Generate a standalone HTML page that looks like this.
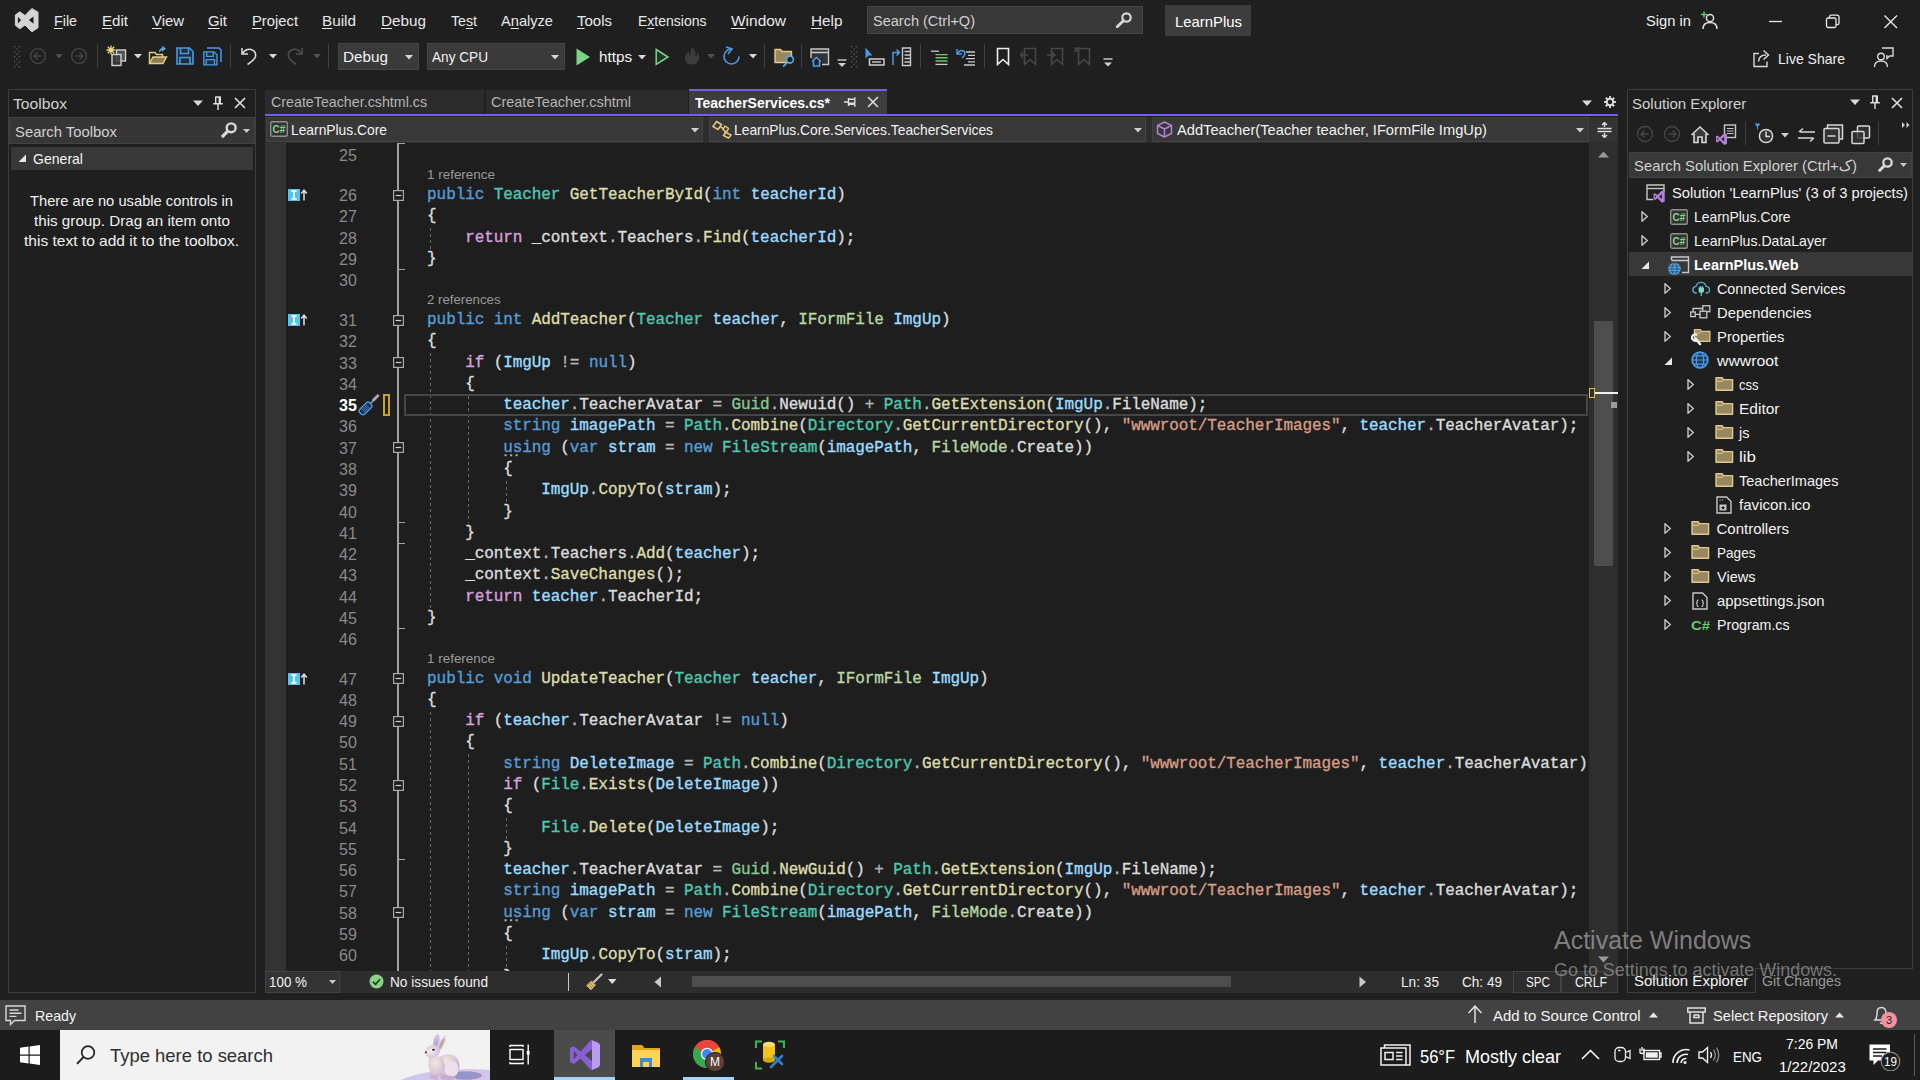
<!DOCTYPE html>
<html lang="en"><head><meta charset="utf-8"><title>LearnPlus - Microsoft Visual Studio</title>
<style>
html,body{margin:0;padding:0;}
body{width:1920px;height:1080px;overflow:hidden;background:#1f1f1f;font-family:"Liberation Sans", "DejaVu Sans", sans-serif;position:relative;}
body>div,body>svg{position:absolute;}
.t{white-space:pre;transform-origin:0 0;}
.c{font-family:"Liberation Mono", monospace;font-size:16px;letter-spacing:-0.088px;white-space:pre;color:#dcdcdc;height:21px;line-height:21px;left:351px;-webkit-text-stroke:0.35px currentColor;}
.k{color:#569cd6}.f{color:#d8a0df}.y{color:#4ec9b0}.i{color:#b8d7a3}.m{color:#dcdcaa}.v{color:#9cdcfe}.s{color:#d69d85}.o{color:#b4b4b4}.g{color:#86c691}
u{text-decoration:underline;text-underline-offset:1.5px;text-decoration-thickness:1px;}
</style></head>
<body>
<svg style="left:14px;top:7px;" width="26" height="26" viewBox="0 0 26 26"><path fill="#d4d4d4" stroke="#d4d4d4" stroke-width="1" stroke-linejoin="round" d="M17.9 1.5 L24 5.2 V20.8 L17.9 24.8 L11 18 L5.8 21.8 L1.4 18.3 V7.9 L5.8 4.8 L11 8.6 Z"/><path fill="#1f1f1f" d="M3.9 9.9 V16.4 L7.1 13.1 Z M19.5 9.6 V16.7 L14.9 13.1 Z"/></svg>
<div class="t" style="left:54px;top:12px;font-size:15px;line-height:17px;color:#e8e8e8;transform:scaleX(0.9515);"><u>F</u>ile</div>
<div class="t" style="left:102px;top:12px;font-size:15px;line-height:17px;color:#e8e8e8;transform:scaleX(1.0054);"><u>E</u>dit</div>
<div class="t" style="left:152px;top:12px;font-size:15px;line-height:17px;color:#e8e8e8;transform:scaleX(0.9922);"><u>V</u>iew</div>
<div class="t" style="left:208px;top:12px;font-size:15px;line-height:17px;color:#e8e8e8;transform:scaleX(0.9910);"><u>G</u>it</div>
<div class="t" style="left:252px;top:12px;font-size:15px;line-height:17px;color:#e8e8e8;transform:scaleX(0.9853);"><u>P</u>roject</div>
<div class="t" style="left:322px;top:12px;font-size:15px;line-height:17px;color:#e8e8e8;transform:scaleX(1.0192);"><u>B</u>uild</div>
<div class="t" style="left:381px;top:12px;font-size:15px;line-height:17px;color:#e8e8e8;transform:scaleX(1.0180);"><u>D</u>ebug</div>
<div class="t" style="left:451px;top:12px;font-size:15px;line-height:17px;color:#e8e8e8;transform:scaleX(0.9449);">Te<u>s</u>t</div>
<div class="t" style="left:501px;top:12px;font-size:15px;line-height:17px;color:#e8e8e8;transform:scaleX(0.9742);">A<u>n</u>alyze</div>
<div class="t" style="left:577px;top:12px;font-size:15px;line-height:17px;color:#e8e8e8;"><u>T</u>ools</div>
<div class="t" style="left:637.5px;top:12px;font-size:15px;line-height:17px;color:#e8e8e8;transform:scaleX(0.9336);">E<u>x</u>tensions</div>
<div class="t" style="left:731px;top:12px;font-size:15px;line-height:17px;color:#e8e8e8;transform:scaleX(1.0307);"><u>W</u>indow</div>
<div class="t" style="left:811px;top:12px;font-size:15px;line-height:17px;color:#e8e8e8;transform:scaleX(1.0208);"><u>H</u>elp</div>
<div style="left:867px;top:6px;width:276px;height:28px;background:#383838;border:1px solid #464646;box-sizing:border-box;"></div>
<div class="t" style="left:873px;top:12px;font-size:15px;line-height:17px;color:#d0d0d0;transform:scaleX(0.9673);">Search (Ctrl+Q)</div>
<svg style="left:1115px;top:11px;" width="18" height="18" viewBox="0 0 18 18"><circle cx="11.5" cy="6.5" r="4.2" fill="none" stroke="#d8d8d8" stroke-width="2.2"/><path d="M8.6 9.4 L2.2 15.8" stroke="#d8d8d8" stroke-width="2.8" stroke-linecap="round"/></svg>
<div style="left:1165px;top:5px;width:86px;height:31px;background:#3d3d3d;"></div>
<div class="t" style="left:1175px;top:13px;font-size:15px;line-height:17px;color:#ffffff;transform:scaleX(0.9919);">LearnPlus</div>
<div class="t" style="left:1646px;top:12px;font-size:15px;line-height:17px;color:#f0f0f0;transform:scaleX(0.9809);">Sign in</div>
<svg style="left:1698px;top:10px;" width="22" height="20" viewBox="0 0 22 20"><g fill="none" stroke="#e0e0e0" stroke-width="1.5"><circle cx="12" cy="8" r="3.6"/><path d="M5 19 Q5 12.5 12 12.5 Q19 12.5 19 19"/></g><path d="M3 4.5 H9 M6 1.5 V7.5" stroke="#5fc86a" stroke-width="1.5"/></svg>
<svg style="left:1768px;top:14px;" width="16" height="14" viewBox="0 0 16 14"><path d="M1 7.5 H14" stroke="#e8e8e8" stroke-width="1.3"/></svg>
<svg style="left:1825px;top:14px;" width="16" height="15" viewBox="0 0 16 15"><g fill="none" stroke="#e8e8e8" stroke-width="1.3"><rect x="1.5" y="4" width="9.5" height="9.5" rx="1.5"/><path d="M4.5 4 V2.8 Q4.5 1.2 6.2 1.2 H12 Q14 1.2 14 3.2 V9 Q14 10.7 12.4 10.7 H11"/></g></svg>
<svg style="left:1883px;top:14px;" width="16" height="15" viewBox="0 0 16 15"><path d="M1.5 1.5 L14 14 M14 1.5 L1.5 14" stroke="#e8e8e8" stroke-width="1.4"/></svg>
<svg style="left:14px;top:46px;" width="7" height="22" viewBox="0 0 7 22"><rect x="0" y="0.0" width="1.3" height="1.3" fill="#5c5c5c"/><rect x="4.8" y="0.0" width="1.3" height="1.3" fill="#5c5c5c"/><rect x="2.4" y="2.5" width="1.3" height="1.3" fill="#5c5c5c"/><rect x="0" y="5.0" width="1.3" height="1.3" fill="#5c5c5c"/><rect x="4.8" y="5.0" width="1.3" height="1.3" fill="#5c5c5c"/><rect x="2.4" y="7.5" width="1.3" height="1.3" fill="#5c5c5c"/><rect x="0" y="10.0" width="1.3" height="1.3" fill="#5c5c5c"/><rect x="4.8" y="10.0" width="1.3" height="1.3" fill="#5c5c5c"/><rect x="2.4" y="12.5" width="1.3" height="1.3" fill="#5c5c5c"/><rect x="0" y="15.0" width="1.3" height="1.3" fill="#5c5c5c"/><rect x="4.8" y="15.0" width="1.3" height="1.3" fill="#5c5c5c"/><rect x="2.4" y="17.5" width="1.3" height="1.3" fill="#5c5c5c"/><rect x="0" y="20.0" width="1.3" height="1.3" fill="#5c5c5c"/><rect x="4.8" y="20.0" width="1.3" height="1.3" fill="#5c5c5c"/></svg>
<svg style="left:851px;top:46px;" width="7" height="22" viewBox="0 0 7 22"><rect x="0" y="0.0" width="1.3" height="1.3" fill="#5c5c5c"/><rect x="4.8" y="0.0" width="1.3" height="1.3" fill="#5c5c5c"/><rect x="2.4" y="2.5" width="1.3" height="1.3" fill="#5c5c5c"/><rect x="0" y="5.0" width="1.3" height="1.3" fill="#5c5c5c"/><rect x="4.8" y="5.0" width="1.3" height="1.3" fill="#5c5c5c"/><rect x="2.4" y="7.5" width="1.3" height="1.3" fill="#5c5c5c"/><rect x="0" y="10.0" width="1.3" height="1.3" fill="#5c5c5c"/><rect x="4.8" y="10.0" width="1.3" height="1.3" fill="#5c5c5c"/><rect x="2.4" y="12.5" width="1.3" height="1.3" fill="#5c5c5c"/><rect x="0" y="15.0" width="1.3" height="1.3" fill="#5c5c5c"/><rect x="4.8" y="15.0" width="1.3" height="1.3" fill="#5c5c5c"/><rect x="2.4" y="17.5" width="1.3" height="1.3" fill="#5c5c5c"/><rect x="0" y="20.0" width="1.3" height="1.3" fill="#5c5c5c"/><rect x="4.8" y="20.0" width="1.3" height="1.3" fill="#5c5c5c"/></svg>
<svg style="left:28.5px;top:47px;" width="18" height="18" viewBox="0 0 18 18"><g fill="none" stroke="#464646" stroke-width="1.4"><circle cx="9" cy="9" r="7.4"/><path d="M12.5 9 H5.5 M8.5 5.5 L5 9 L8.5 12.5"/></g></svg>
<svg style="left:55px;top:54px;" width="9" height="5" viewBox="0 0 9 5"><path d="M0 0 H8 L4 4.5 Z" fill="#4c4c4c"/></svg>
<svg style="left:69.5px;top:47px;" width="18" height="18" viewBox="0 0 18 18"><g fill="none" stroke="#464646" stroke-width="1.4"><circle cx="9" cy="9" r="7.4"/><path d="M5.5 9 H12.5 M9.5 5.5 L13 9 L9.5 12.5"/></g></svg>
<div style="left:97px;top:44px;width:1px;height:24px;background:#3f3f3f;"></div>
<svg style="left:106px;top:45px;" width="22" height="22" viewBox="0 0 22 22"><g stroke="#d0d0d0" stroke-width="1.4"><rect x="10.5" y="5" width="9" height="11" fill="#505050"/><rect x="6" y="9.5" width="9" height="11" fill="#3c3c3c" fill-opacity=".85"/></g><g stroke="#f0d98c" stroke-width="1.3"><path d="M5 0.5 V9.5 M0.5 5 H9.5 M1.8 1.8 L8.2 8.2 M8.2 1.8 L1.8 8.2"/></g></svg>
<svg style="left:134px;top:54px;" width="9" height="5" viewBox="0 0 9 5"><path d="M0 0 H8 L4 4.5 Z" fill="#d8d8d8"/></svg>
<svg style="left:148px;top:46px;" width="22" height="20" viewBox="0 0 22 20"><path d="M1.5 17.5 V6.5 H7 L8.5 8.5 H14.5 V11" fill="none" stroke="#e5cc88" stroke-width="1.4"/><path d="M1.5 17.5 L5 11 H18.5 L15 17.5 Z" fill="#e5cc88" fill-opacity=".55" stroke="#e5cc88" stroke-width="1.4"/><path d="M11.5 6 Q12 2.5 16.5 2.5 M14 0.5 L16.8 2.5 L14 5" fill="none" stroke="#5aa9e6" stroke-width="1.5"/></svg>
<svg style="left:176px;top:47px;" width="18" height="18" viewBox="0 0 18 18"><path d="M1 1 H13.5 L17 4.5 V17 H1 Z" fill="#1e2c3c" stroke="#4a9ae8" stroke-width="1.6"/><path d="M4.5 1 V6.5 H12.5 V1 M4 17 V10.5 H14 V17" fill="none" stroke="#4a9ae8" stroke-width="1.6"/></svg>
<svg style="left:203px;top:47px;" width="19" height="19" viewBox="0 0 19 19"><path d="M4 1 H16 L18 3 V15" fill="none" stroke="#4a9ae8" stroke-width="1.5"/><g transform="translate(0,4) scale(.82)"><path d="M1 1 H13.5 L17 4.5 V17 H1 Z" fill="#1e2c3c" stroke="#4a9ae8" stroke-width="1.6"/><path d="M4.5 1 V6.5 H12.5 V1 M4 17 V10.5 H14 V17" fill="none" stroke="#4a9ae8" stroke-width="1.6"/></g></svg>
<div style="left:230px;top:44px;width:1px;height:24px;background:#3f3f3f;"></div>
<svg style="left:240px;top:46px;" width="18" height="20" viewBox="0 0 18 20"><path d="M2 2 V8 H8" fill="none" stroke="#e0e0e0" stroke-width="1.5"/><path d="M2.5 7.5 Q6 2.5 11 3.5 Q16.5 5 15.5 10.5 Q14.5 14 7.5 18.5" fill="none" stroke="#e0e0e0" stroke-width="1.5"/></svg>
<svg style="left:269px;top:54px;" width="9" height="5" viewBox="0 0 9 5"><path d="M0 0 H8 L4 4.5 Z" fill="#d8d8d8"/></svg>
<svg style="left:286px;top:46px;" width="18" height="20" viewBox="0 0 18 20"><g transform="translate(18,0) scale(-1,1)"><path d="M2 2 V8 H8" fill="none" stroke="#505050" stroke-width="1.5"/><path d="M2.5 7.5 Q6 2.5 11 3.5 Q16.5 5 15.5 10.5 Q14.5 14 7.5 18.5" fill="none" stroke="#505050" stroke-width="1.5"/></g></svg>
<svg style="left:313px;top:54px;" width="9" height="5" viewBox="0 0 9 5"><path d="M0 0 H8 L4 4.5 Z" fill="#505050"/></svg>
<div style="left:328px;top:44px;width:1px;height:24px;background:#3f3f3f;"></div>
<div style="left:338px;top:43px;width:81px;height:27px;background:#3a3a3a;border:1px solid #444;box-sizing:border-box;"></div>
<div class="t" style="left:343px;top:48px;font-size:15px;line-height:17px;color:#f2f2f2;transform:scaleX(1.0180);">Debug</div>
<svg style="left:405px;top:55px;" width="9" height="5" viewBox="0 0 9 5"><path d="M0 0 H8 L4 4.5 Z" fill="#d8d8d8"/></svg>
<div style="left:427px;top:43px;width:138px;height:27px;background:#3a3a3a;border:1px solid #444;box-sizing:border-box;"></div>
<div class="t" style="left:432px;top:48px;font-size:15px;line-height:17px;color:#f2f2f2;transform:scaleX(0.9078);">Any CPU</div>
<svg style="left:551px;top:55px;" width="9" height="5" viewBox="0 0 9 5"><path d="M0 0 H8 L4 4.5 Z" fill="#d8d8d8"/></svg>
<svg style="left:576px;top:48px;" width="15" height="18" viewBox="0 0 15 18"><path d="M0.5 0.5 L14 9 L0.5 17.5 Z" fill="#79d688"/></svg>
<div class="t" style="left:599px;top:48px;font-size:15px;line-height:17px;color:#f2f2f2;transform:scaleX(1.0144);">https</div>
<svg style="left:638px;top:55px;" width="9" height="5" viewBox="0 0 9 5"><path d="M0 0 H8 L4 4.5 Z" fill="#d8d8d8"/></svg>
<svg style="left:655px;top:48px;" width="15" height="18" viewBox="0 0 15 18"><path d="M1.2 1.5 L13 9 L1.2 16.5 Z" fill="#243326" stroke="#79d688" stroke-width="1.5"/></svg>
<svg style="left:682px;top:46px;" width="20" height="20" viewBox="0 0 20 20"><path d="M10 1 Q15 6 13 10 Q16 9 15.5 6 Q19 11 16 15.5 Q13 19 8.5 18.5 Q3 17.5 3 12 Q3 8 7 5.5 Q6.5 8.5 8.5 9.5 Q8 5 10 1 Z" fill="#3c3c3c"/></svg>
<svg style="left:707px;top:54px;" width="9" height="5" viewBox="0 0 9 5"><path d="M0 0 H8 L4 4.5 Z" fill="#505050"/></svg>
<svg style="left:722px;top:46px;" width="20" height="20" viewBox="0 0 20 20"><path d="M9.5 3 A7.5 7.5 0 1 0 17 10.5" fill="none" stroke="#4a9ae8" stroke-width="1.6"/><path d="M4 1 L10 3 L6 8" fill="none" stroke="#4a9ae8" stroke-width="1.6"/></svg>
<svg style="left:749px;top:54px;" width="9" height="5" viewBox="0 0 9 5"><path d="M0 0 H8 L4 4.5 Z" fill="#d8d8d8"/></svg>
<div style="left:764px;top:44px;width:1px;height:24px;background:#3f3f3f;"></div>
<svg style="left:774px;top:48px;" width="22" height="20" viewBox="0 0 22 20"><path d="M1 14.5 V1.5 H6.5 L8 3.5 H17.5 V14.5 Z" fill="#978862" stroke="#e5cc88" stroke-width="1.4" stroke-linejoin="round"/><circle cx="16" cy="11.5" r="3.4" fill="#1f1f1f" stroke="#5aa9e6" stroke-width="1.6"/><path d="M13.5 14 L9.2 18.6" stroke="#5aa9e6" stroke-width="1.8"/></svg>
<div style="left:801px;top:44px;width:1px;height:24px;background:#3f3f3f;"></div>
<svg style="left:810px;top:48px;" width="20" height="20" viewBox="0 0 20 20"><path d="M1 1 H18.5 V16.5 H1 Z" fill="#333"/><path d="M12 16.5 H18.5 V1 H1 V10" fill="none" stroke="#c8c8c8" stroke-width="1.4"/><path d="M1 4.5 H18.5" stroke="#c8c8c8" stroke-width="1.6"/><path d="M0 19 V11 H12 V19 Z" fill="#1f1f1f"/><path d="M2 13.5 L6.5 9.5 L11 13.5 M3.5 13 V18 H9.5 V13" fill="#1f1f1f" stroke="#4aa0f0" stroke-width="1.6"/></svg>
<svg style="left:837px;top:59px;" width="10" height="8" viewBox="0 0 10 8"><path d="M0.5 1 H9.5" stroke="#d0d0d0" stroke-width="1.4"/><path d="M1 4 H9 L5 8 Z" fill="#d0d0d0"/></svg>
<svg style="left:865px;top:47px;" width="21" height="20" viewBox="0 0 21 20"><path d="M0.5 0.5 L7.5 8.5 L3.5 8.5 L0.5 11.5 Z" fill="#4a9ae8"/><rect x="4.5" y="12" width="14.5" height="6" fill="none" stroke="#d0d0d0" stroke-width="1.5"/><path d="M7 15 H16" stroke="#d0d0d0" stroke-width="1.4"/></svg>
<svg style="left:892px;top:47px;" width="21" height="20" viewBox="0 0 21 20"><path d="M1 18 V5.5 H7 M4.5 2.5 L7.5 5.5 L4.5 8.5" fill="none" stroke="#4a9ae8" stroke-width="1.5"/><path d="M10.5 1 H18.5 V18.5 H10.5 Z" fill="none" stroke="#c8c8c8" stroke-width="1.4"/><path d="M12.5 4.5 H18 M12.5 8 H18 M12.5 11.5 H18 M12.5 15 H18" stroke="#c8c8c8" stroke-width="1.4"/></svg>
<div style="left:920px;top:44px;width:1px;height:24px;background:#3f3f3f;"></div>
<svg style="left:930px;top:50px;" width="19" height="16" viewBox="0 0 19 16"><path d="M1 1.2 H9" stroke="#c8c8c8" stroke-width="1.3"/><path d="M5.5 4.6 H17.5 M5.5 7.8 H17.5 M5.5 11 H17.5" stroke="#6ccb6f" stroke-width="1.4"/><path d="M5.5 14.4 H17.5" stroke="#c8c8c8" stroke-width="1.3"/></svg>
<svg style="left:955px;top:48px;" width="21" height="18" viewBox="0 0 21 18"><path d="M2 1 V6 H7 M2.5 5.5 Q5 1.5 8.5 3 Q11 4.5 9 8 L7 10" fill="none" stroke="#4a9ae8" stroke-width="1.5"/><path d="M11 4 H20 M13 7.3 H20 M11 10.6 H20 M13 13.9 H20 M9 17 H20" stroke="#c8c8c8" stroke-width="1.3"/></svg>
<div style="left:984px;top:44px;width:1px;height:24px;background:#3f3f3f;"></div>
<svg style="left:993px;top:47px;" width="20" height="20" viewBox="0 0 20 20"><path d="M4.5 1.5 H15.5 V17.5 L10 12.5 L4.5 17.5 Z" fill="none" stroke="#ededed" stroke-width="1.6"/></svg>
<svg style="left:1020px;top:47px;" width="20" height="20" viewBox="0 0 20 20"><path d="M4.5 1.5 H15.5 V17.5 L10 12.5 L4.5 17.5 Z" fill="none" stroke="#484848" stroke-width="1.6"/><path d="M0 8 H8 M3 5 L0 8 L3 11" fill="none" stroke="#484848" stroke-width="1.4"/></svg>
<svg style="left:1047px;top:47px;" width="20" height="20" viewBox="0 0 20 20"><path d="M4.5 1.5 H15.5 V17.5 L10 12.5 L4.5 17.5 Z" fill="none" stroke="#484848" stroke-width="1.6"/><path d="M0 8 H8 M5 5 L8 8 L5 11" fill="none" stroke="#484848" stroke-width="1.4"/></svg>
<svg style="left:1074px;top:47px;" width="20" height="20" viewBox="0 0 20 20"><path d="M4.5 1.5 H15.5 V17.5 L10 12.5 L4.5 17.5 Z" fill="none" stroke="#484848" stroke-width="1.6"/><path d="M0 0 L5 5 M5 0 L0 5" fill="none" stroke="#484848" stroke-width="1.3"/></svg>
<svg style="left:1103px;top:58px;" width="10" height="9" viewBox="0 0 10 9"><path d="M0.5 1 H9.5" stroke="#d0d0d0" stroke-width="1.4"/><path d="M1 4.5 H9 L5 8.5 Z" fill="#d0d0d0"/></svg>
<svg style="left:1752px;top:49px;" width="20" height="19" viewBox="0 0 20 19"><path d="M7 4.5 H2 V17.5 H15 V12.5" fill="none" stroke="#d8d8d8" stroke-width="1.4"/><path d="M6.5 12.5 Q7 6 14 6 M11.5 1.5 L16.5 6 L11.5 10.5" fill="none" stroke="#d8d8d8" stroke-width="1.5"/></svg>
<div class="t" style="left:1778px;top:50px;font-size:15px;line-height:17px;color:#f0f0f0;transform:scaleX(0.9342);">Live Share</div>
<svg style="left:1873px;top:47px;" width="22" height="21" viewBox="0 0 22 21"><g fill="none" stroke="#d8d8d8" stroke-width="1.4"><circle cx="8" cy="9.5" r="3.3"/><path d="M1.5 20 Q1.5 14 8 14 Q14.5 14 14.5 20"/><path d="M9 1 H20 V9 H16.5 L14 11.5 V9 H13"/></g></svg>
<div style="left:8px;top:89px;width:248px;height:904px;background:#1f1f1f;border:1px solid #3d3d3d;box-sizing:border-box;"></div>
<div class="t" style="left:13px;top:95px;font-size:15px;line-height:17px;color:#d0d0d0;transform:scaleX(1.0444);">Toolbox</div>
<svg style="left:193px;top:100px;" width="11" height="7" viewBox="0 0 11 7"><path d="M0 0.5 H10 L5 6 Z" fill="#d8d8d8"/></svg>
<svg style="left:212px;top:96px;" width="12" height="15" viewBox="0 0 12 15"><g fill="none" stroke="#e0e0e0" stroke-width="1.4"><path d="M3.2 1 H8.8 M3.7 1 V7.2 M8.3 1 V7.2 M1.2 7.7 H10.8 M6 7.7 V14"/></g><path d="M6.6 1 H8.3 V7.2 H6.6 Z" fill="#e0e0e0"/></svg>
<svg style="left:234px;top:97px;" width="12" height="12" viewBox="0 0 12 12"><path d="M1 1 L11 11 M11 1 L1 11" stroke="#e0e0e0" stroke-width="1.6"/></svg>
<div style="left:9px;top:117px;width:246px;height:27px;background:#363636;border:1px solid #424242;box-sizing:border-box;"></div>
<div class="t" style="left:15px;top:123px;font-size:15px;line-height:17px;color:#d0d0d0;transform:scaleX(0.9891);">Search Toolbox</div>
<svg style="left:220px;top:122px;" width="17" height="17" viewBox="0 0 16 16"><circle cx="10.5" cy="5.5" r="4.2" fill="none" stroke="#d8d8d8" stroke-width="2.3"/><path d="M7.3 8.7 L1.8 14.2" stroke="#d8d8d8" stroke-width="3" stroke-linecap="butt"/></svg>
<svg style="left:243px;top:129px;" width="8" height="5" viewBox="0 0 8 5"><path d="M0 0 H7 L3.5 4 Z" fill="#c8c8c8"/></svg>
<div style="left:11px;top:147px;width:242px;height:23px;background:#383838;"></div>
<svg style="left:18px;top:154px;" width="9" height="9" viewBox="0 0 9 9"><path d="M8 0.5 V8 H0.5 Z" fill="#e8e8e8"/></svg>
<div class="t" style="left:33px;top:150px;font-size:15px;line-height:17px;color:#f4f4f4;transform:scaleX(0.9368);">General</div>
<div class="t" style="left:30px;top:192px;font-size:15px;line-height:17px;color:#f0f0f0;transform:scaleX(0.9816);">There are no usable controls in</div>
<div class="t" style="left:34px;top:212px;font-size:15px;line-height:17px;color:#f0f0f0;transform:scaleX(1.0132);">this group. Drag an item onto</div>
<div class="t" style="left:24px;top:232px;font-size:15px;line-height:17px;color:#f0f0f0;transform:scaleX(1.0354);">this text to add it to the toolbox.</div>
<div style="left:265px;top:90px;width:219px;height:24px;background:#2b2b2b;"></div>
<div class="t" style="left:271px;top:93px;font-size:15px;line-height:17px;color:#b4b4b4;transform:scaleX(0.9499);">CreateTeacher.cshtml.cs</div>
<div style="left:486px;top:90px;width:202px;height:24px;background:#2b2b2b;"></div>
<div class="t" style="left:491px;top:93px;font-size:15px;line-height:17px;color:#b4b4b4;transform:scaleX(0.9650);">CreateTeacher.cshtml</div>
<div style="left:689px;top:89px;width:198px;height:26px;background:#3d3d3d;"></div>
<div style="left:689px;top:89px;width:198px;height:2px;background:#7160e8;"></div>
<div class="t" style="left:694.5px;top:93.5px;font-size:15px;line-height:17px;color:#ffffff;font-weight:700;transform:scaleX(0.9320);">TeacherServices.cs*</div>
<svg style="left:844px;top:96px;" width="12" height="12" viewBox="0 0 12 12"><g fill="none" stroke="#e0e0e0" stroke-width="1.4"><path d="M0 6 H4.5 M4.5 2 V10 M4.5 3.2 H10 M4.5 8.3 H10 M10.8 1.2 V10.8"/></g><path d="M4.5 6.5 H10 V8.3 H4.5 Z" fill="#e0e0e0"/></svg>
<svg style="left:867px;top:96px;" width="12" height="12" viewBox="0 0 12 12"><path d="M1 1 L11 11 M11 1 L1 11" stroke="#e0e0e0" stroke-width="1.5"/></svg>
<div style="left:265px;top:113.75px;width:1353px;height:2.5px;background:#7160e8;"></div>
<svg style="left:1582px;top:100px;" width="11" height="7" viewBox="0 0 11 7"><path d="M0 0.5 H10 L5 6 Z" fill="#d8d8d8"/></svg>
<svg style="left:1603px;top:94.5px;" width="14" height="14" viewBox="0 0 14 14"><g transform="translate(7,7)"><g fill="#d8d8d8"><rect x="-1" y="-5.9" width="2" height="2.8" transform="rotate(0)"/><rect x="-1" y="-5.9" width="2" height="2.8" transform="rotate(45)"/><rect x="-1" y="-5.9" width="2" height="2.8" transform="rotate(90)"/><rect x="-1" y="-5.9" width="2" height="2.8" transform="rotate(135)"/><rect x="-1" y="-5.9" width="2" height="2.8" transform="rotate(180)"/><rect x="-1" y="-5.9" width="2" height="2.8" transform="rotate(225)"/><rect x="-1" y="-5.9" width="2" height="2.8" transform="rotate(270)"/><rect x="-1" y="-5.9" width="2" height="2.8" transform="rotate(315)"/></g><circle r="3.2" fill="none" stroke="#d8d8d8" stroke-width="1.9"/></g></svg>
<div style="left:265px;top:116.5px;width:1353px;height:26px;background:#2d2d2d;"></div>
<div style="left:266px;top:117px;width:437px;height:25px;background:#383838;border:1px solid #434343;box-sizing:border-box;"></div>
<div style="left:709px;top:117px;width:437px;height:25px;background:#383838;border:1px solid #434343;box-sizing:border-box;"></div>
<div style="left:1152px;top:117px;width:437px;height:25px;background:#383838;border:1px solid #434343;box-sizing:border-box;"></div>
<svg style="left:691px;top:128px;" width="9" height="5" viewBox="0 0 9 5"><path d="M0 0 H8 L4 4.5 Z" fill="#d0d0d0"/></svg>
<svg style="left:1134px;top:128px;" width="9" height="5" viewBox="0 0 9 5"><path d="M0 0 H8 L4 4.5 Z" fill="#d0d0d0"/></svg>
<svg style="left:1576px;top:128px;" width="9" height="5" viewBox="0 0 9 5"><path d="M0 0 H8 L4 4.5 Z" fill="#d0d0d0"/></svg>
<svg style="left:270px;top:121px;" width="18" height="16" viewBox="0 0 18 16"><rect x="0.7" y="0.7" width="16.6" height="14.6" rx="1.5" fill="#333" stroke="#8e8e8e" stroke-width="1.4"/><text x="9" y="11.8" font-family="Liberation Sans, sans-serif" font-size="10" font-weight="700" fill="#7fd685" text-anchor="middle">C#</text></svg>
<div class="t" style="left:291px;top:121px;font-size:15px;line-height:17px;color:#f2f2f2;transform:scaleX(0.9210);">LearnPlus.Core</div>
<svg style="left:712px;top:120px;" width="21" height="19" viewBox="0 0 21 19"><g fill="none" stroke="#e8c97a" stroke-width="1.5"><path d="M4.5 1.5 L9.5 4.5 L6 9.5 L1 6.5 Z"/><path d="M13 6 L16.5 8.5 L14.5 12 L11 9.5 Z"/><path d="M14 12.5 L19 15 L16.5 18 L11.5 15.5 Z"/><path d="M8.5 7 L11.5 8.5 M12.5 11.5 L13 13"/></g></svg>
<div class="t" style="left:734px;top:121px;font-size:15px;line-height:17px;color:#f2f2f2;transform:scaleX(0.9218);">LearnPlus.Core.Services.TeacherServices</div>
<svg style="left:1156px;top:121px;" width="17" height="17" viewBox="0 0 17 17"><g fill="none" stroke="#b180d7" stroke-width="1.5" stroke-linejoin="round"><path d="M8.5 1 L15.5 4.5 V12.5 L8.5 16 L1.5 12.5 V4.5 Z"/><path d="M1.5 4.5 L8.5 8 L15.5 4.5 M8.5 8 V16"/></g></svg>
<div class="t" style="left:1177px;top:121px;font-size:15px;line-height:17px;color:#f2f2f2;transform:scaleX(0.9785);">AddTeacher(Teacher teacher, IFormFile ImgUp)</div>
<div style="left:1590px;top:117px;width:28px;height:25px;background:#333333;"></div>
<svg style="left:1597px;top:122px;" width="15" height="16" viewBox="0 0 15 16"><path d="M0.5 6.5 H14.5 M0.5 9.5 H14.5 M7.5 0.5 V5 M7.5 11 V15.5 M5 3 L7.5 0.5 L10 3 M5 13 L7.5 15.5 L10 13" fill="none" stroke="#e0e0e0" stroke-width="1.4"/></svg>
<div style="left:265px;top:142.5px;width:1324px;height:828.5px;background:#1e1e1e;"></div>
<div style="left:265px;top:142.5px;width:21px;height:828.5px;background:#333333;"></div>
<div style="left:1589px;top:142.5px;width:29px;height:828.5px;background:#2e2e2e;"></div>
<div style="left:1594px;top:321px;width:19px;height:245px;background:#4d4d4d;"></div>
<svg style="left:1598px;top:151px;" width="12" height="7" viewBox="0 0 12 7"><path d="M0 6.5 L5.5 0.5 L11 6.5 Z" fill="#999"/></svg>
<svg style="left:1598px;top:956px;" width="12" height="7" viewBox="0 0 12 7"><path d="M0 0.5 L5.5 6.5 L11 0.5 Z" fill="#999"/></svg>
<div style="left:1595px;top:391.5px;width:23px;height:2px;background:#f0f0f0;"></div>
<div style="left:1589px;top:388px;width:6px;height:10px;border:1px solid #e8c530;box-sizing:border-box;"></div>
<div style="left:1611px;top:402px;width:6px;height:6px;background:#9a9a9a;"></div>
<div style="left:397.25px;top:142.5px;width:1.5px;height:828.5px;background:#a0a0a0;"></div>
<div style="left:430.0px;top:228.06px;width:1px;height:21.0px;background:repeating-linear-gradient(180deg,#6a6a6a 0 3px,transparent 3px 6px);"></div>
<div style="left:430.0px;top:353.06px;width:1px;height:255.07999999999998px;background:repeating-linear-gradient(180deg,#6a6a6a 0 3px,transparent 3px 6px);"></div>
<div style="left:468.0px;top:395.62px;width:1px;height:127.39999999999998px;background:repeating-linear-gradient(180deg,#6a6a6a 0 3px,transparent 3px 6px);"></div>
<div style="left:506.0px;top:480.74px;width:1px;height:21.0px;background:repeating-linear-gradient(180deg,#6a6a6a 0 3px,transparent 3px 6px);"></div>
<div style="left:430.0px;top:711.6600000000001px;width:1px;height:259.3399999999999px;background:repeating-linear-gradient(180deg,#6a6a6a 0 3px,transparent 3px 6px);"></div>
<div style="left:468.0px;top:754.22px;width:1px;height:216.77999999999997px;background:repeating-linear-gradient(180deg,#6a6a6a 0 3px,transparent 3px 6px);"></div>
<div style="left:506.0px;top:818.0600000000001px;width:1px;height:21.0px;background:repeating-linear-gradient(180deg,#6a6a6a 0 3px,transparent 3px 6px);"></div>
<div style="left:506.0px;top:945.74px;width:1px;height:25.25999999999999px;background:repeating-linear-gradient(180deg,#6a6a6a 0 3px,transparent 3px 6px);"></div>
<div style="left:398px;top:143px;width:6.5px;height:1.3px;background:#a0a0a0;"></div>
<div style="left:398px;top:268.84000000000003px;width:6.5px;height:1.3px;background:#a0a0a0;"></div>
<div style="left:398px;top:521.52px;width:6.5px;height:1.3px;background:#a0a0a0;"></div>
<div style="left:398px;top:542.8px;width:6.5px;height:1.3px;background:#a0a0a0;"></div>
<div style="left:398px;top:627.9200000000001px;width:6.5px;height:1.3px;background:#a0a0a0;"></div>
<div style="left:398px;top:858.84px;width:6.5px;height:1.3px;background:#a0a0a0;"></div>
<svg style="left:392.5px;top:189.5px;" width="11" height="11" viewBox="0 0 11 11"><rect x="0.6" y="0.6" width="9.8" height="9.8" fill="#1e1e1e" stroke="#a8a8a8" stroke-width="1.2"/><path d="M2.7 5.5 H8.3" stroke="#d0d0d0" stroke-width="1.2"/></svg>
<svg style="left:392.5px;top:314.5px;" width="11" height="11" viewBox="0 0 11 11"><rect x="0.6" y="0.6" width="9.8" height="9.8" fill="#1e1e1e" stroke="#a8a8a8" stroke-width="1.2"/><path d="M2.7 5.5 H8.3" stroke="#d0d0d0" stroke-width="1.2"/></svg>
<svg style="left:392.5px;top:357.06px;" width="11" height="11" viewBox="0 0 11 11"><rect x="0.6" y="0.6" width="9.8" height="9.8" fill="#1e1e1e" stroke="#a8a8a8" stroke-width="1.2"/><path d="M2.7 5.5 H8.3" stroke="#d0d0d0" stroke-width="1.2"/></svg>
<svg style="left:392.5px;top:442.18px;" width="11" height="11" viewBox="0 0 11 11"><rect x="0.6" y="0.6" width="9.8" height="9.8" fill="#1e1e1e" stroke="#a8a8a8" stroke-width="1.2"/><path d="M2.7 5.5 H8.3" stroke="#d0d0d0" stroke-width="1.2"/></svg>
<svg style="left:392.5px;top:673.1px;" width="11" height="11" viewBox="0 0 11 11"><rect x="0.6" y="0.6" width="9.8" height="9.8" fill="#1e1e1e" stroke="#a8a8a8" stroke-width="1.2"/><path d="M2.7 5.5 H8.3" stroke="#d0d0d0" stroke-width="1.2"/></svg>
<svg style="left:392.5px;top:715.6600000000001px;" width="11" height="11" viewBox="0 0 11 11"><rect x="0.6" y="0.6" width="9.8" height="9.8" fill="#1e1e1e" stroke="#a8a8a8" stroke-width="1.2"/><path d="M2.7 5.5 H8.3" stroke="#d0d0d0" stroke-width="1.2"/></svg>
<svg style="left:392.5px;top:779.5px;" width="11" height="11" viewBox="0 0 11 11"><rect x="0.6" y="0.6" width="9.8" height="9.8" fill="#1e1e1e" stroke="#a8a8a8" stroke-width="1.2"/><path d="M2.7 5.5 H8.3" stroke="#d0d0d0" stroke-width="1.2"/></svg>
<svg style="left:392.5px;top:907.1800000000001px;" width="11" height="11" viewBox="0 0 11 11"><rect x="0.6" y="0.6" width="9.8" height="9.8" fill="#1e1e1e" stroke="#a8a8a8" stroke-width="1.2"/><path d="M2.7 5.5 H8.3" stroke="#d0d0d0" stroke-width="1.2"/></svg>
<div style="left:404px;top:394px;width:1184px;height:21.7px;border:2px solid #464646;box-sizing:border-box;"></div>
<div style="left:383px;top:394px;width:7px;height:22px;border:2px solid #c9a227;box-sizing:border-box;"></div>
<svg style="left:358px;top:394px;" width="22" height="22" viewBox="0 0 22 22"><path d="M12.5 9.5 L17 5" stroke="#a8a8a8" stroke-width="1.5"/><path d="M15.8 5.8 L19.8 1.8" stroke="#a8a8a8" stroke-width="3" stroke-linecap="round"/><g transform="rotate(-45 7.5 14.5)"><rect x="0.5" y="11" width="14" height="7" rx="2.6" fill="#1e2a38" stroke="#4a9ae8" stroke-width="1.4"/><path d="M3.5 13 H11.5 M3.5 14.6 H11.5 M3.5 16.2 H11.5" stroke="#4a9ae8" stroke-width=".8"/></g></svg>
<svg style="left:288px;top:189.0px;" width="20" height="12" viewBox="0 0 20 12"><rect x="0" y="0" width="12" height="12" fill="#55c3ee"/><path d="M3.5 2.2 H8.5 M3.5 9.8 H8.5 M6 2.2 V9.8" stroke="#ffffff" stroke-width="1.7"/><path d="M16 11.5 V1.5 M13.2 4.5 L16 1.2 L18.8 4.5" fill="none" stroke="#e0e0e0" stroke-width="1.5"/></svg>
<svg style="left:288px;top:314.0px;" width="20" height="12" viewBox="0 0 20 12"><rect x="0" y="0" width="12" height="12" fill="#55c3ee"/><path d="M3.5 2.2 H8.5 M3.5 9.8 H8.5 M6 2.2 V9.8" stroke="#ffffff" stroke-width="1.7"/><path d="M16 11.5 V1.5 M13.2 4.5 L16 1.2 L18.8 4.5" fill="none" stroke="#e0e0e0" stroke-width="1.5"/></svg>
<svg style="left:288px;top:672.6px;" width="20" height="12" viewBox="0 0 20 12"><rect x="0" y="0" width="12" height="12" fill="#55c3ee"/><path d="M3.5 2.2 H8.5 M3.5 9.8 H8.5 M6 2.2 V9.8" stroke="#ffffff" stroke-width="1.7"/><path d="M16 11.5 V1.5 M13.2 4.5 L16 1.2 L18.8 4.5" fill="none" stroke="#e0e0e0" stroke-width="1.5"/></svg>
<div class="t" style="left:339px;top:147px;font-size:16px;line-height:18px;color:#8a8a8a;font-family:"Liberation Mono", monospace;transform:scaleX(0.9634);-webkit-text-stroke:0.2px currentColor;">25</div>
<div class="t" style="left:339px;top:187.0px;font-size:16px;line-height:18px;color:#8a8a8a;font-family:"Liberation Mono", monospace;transform:scaleX(0.9634);-webkit-text-stroke:0.2px currentColor;">26</div>
<div class="t" style="left:339px;top:208.28px;font-size:16px;line-height:18px;color:#8a8a8a;font-family:"Liberation Mono", monospace;transform:scaleX(0.9634);-webkit-text-stroke:0.2px currentColor;">27</div>
<div class="t" style="left:339px;top:229.56px;font-size:16px;line-height:18px;color:#8a8a8a;font-family:"Liberation Mono", monospace;transform:scaleX(0.9634);-webkit-text-stroke:0.2px currentColor;">28</div>
<div class="t" style="left:339px;top:250.84000000000003px;font-size:16px;line-height:18px;color:#8a8a8a;font-family:"Liberation Mono", monospace;transform:scaleX(0.9634);-webkit-text-stroke:0.2px currentColor;">29</div>
<div class="t" style="left:339px;top:272.12px;font-size:16px;line-height:18px;color:#8a8a8a;font-family:"Liberation Mono", monospace;transform:scaleX(0.9634);-webkit-text-stroke:0.2px currentColor;">30</div>
<div class="t" style="left:339px;top:312.0px;font-size:16px;line-height:18px;color:#8a8a8a;font-family:"Liberation Mono", monospace;transform:scaleX(0.9634);-webkit-text-stroke:0.2px currentColor;">31</div>
<div class="t" style="left:339px;top:333.28px;font-size:16px;line-height:18px;color:#8a8a8a;font-family:"Liberation Mono", monospace;transform:scaleX(0.9634);-webkit-text-stroke:0.2px currentColor;">32</div>
<div class="t" style="left:339px;top:354.56px;font-size:16px;line-height:18px;color:#8a8a8a;font-family:"Liberation Mono", monospace;transform:scaleX(0.9634);-webkit-text-stroke:0.2px currentColor;">33</div>
<div class="t" style="left:339px;top:375.84000000000003px;font-size:16px;line-height:18px;color:#8a8a8a;font-family:"Liberation Mono", monospace;transform:scaleX(0.9634);-webkit-text-stroke:0.2px currentColor;">34</div>
<div class="t" style="left:339px;top:397.12px;font-size:16px;line-height:18px;color:#ffffff;font-weight:700;font-family:"Liberation Mono", monospace;transform:scaleX(0.9634);-webkit-text-stroke:0.2px currentColor;">35</div>
<div class="t" style="left:339px;top:418.4px;font-size:16px;line-height:18px;color:#8a8a8a;font-family:"Liberation Mono", monospace;transform:scaleX(0.9634);-webkit-text-stroke:0.2px currentColor;">36</div>
<div class="t" style="left:339px;top:439.68px;font-size:16px;line-height:18px;color:#8a8a8a;font-family:"Liberation Mono", monospace;transform:scaleX(0.9634);-webkit-text-stroke:0.2px currentColor;">37</div>
<div class="t" style="left:339px;top:460.96000000000004px;font-size:16px;line-height:18px;color:#8a8a8a;font-family:"Liberation Mono", monospace;transform:scaleX(0.9634);-webkit-text-stroke:0.2px currentColor;">38</div>
<div class="t" style="left:339px;top:482.24px;font-size:16px;line-height:18px;color:#8a8a8a;font-family:"Liberation Mono", monospace;transform:scaleX(0.9634);-webkit-text-stroke:0.2px currentColor;">39</div>
<div class="t" style="left:339px;top:503.52px;font-size:16px;line-height:18px;color:#8a8a8a;font-family:"Liberation Mono", monospace;transform:scaleX(0.9634);-webkit-text-stroke:0.2px currentColor;">40</div>
<div class="t" style="left:339px;top:524.8px;font-size:16px;line-height:18px;color:#8a8a8a;font-family:"Liberation Mono", monospace;transform:scaleX(0.9634);-webkit-text-stroke:0.2px currentColor;">41</div>
<div class="t" style="left:339px;top:546.08px;font-size:16px;line-height:18px;color:#8a8a8a;font-family:"Liberation Mono", monospace;transform:scaleX(0.9634);-webkit-text-stroke:0.2px currentColor;">42</div>
<div class="t" style="left:339px;top:567.36px;font-size:16px;line-height:18px;color:#8a8a8a;font-family:"Liberation Mono", monospace;transform:scaleX(0.9634);-webkit-text-stroke:0.2px currentColor;">43</div>
<div class="t" style="left:339px;top:588.64px;font-size:16px;line-height:18px;color:#8a8a8a;font-family:"Liberation Mono", monospace;transform:scaleX(0.9634);-webkit-text-stroke:0.2px currentColor;">44</div>
<div class="t" style="left:339px;top:609.9200000000001px;font-size:16px;line-height:18px;color:#8a8a8a;font-family:"Liberation Mono", monospace;transform:scaleX(0.9634);-webkit-text-stroke:0.2px currentColor;">45</div>
<div class="t" style="left:339px;top:631.2px;font-size:16px;line-height:18px;color:#8a8a8a;font-family:"Liberation Mono", monospace;transform:scaleX(0.9634);-webkit-text-stroke:0.2px currentColor;">46</div>
<div class="t" style="left:339px;top:670.6px;font-size:16px;line-height:18px;color:#8a8a8a;font-family:"Liberation Mono", monospace;transform:scaleX(0.9634);-webkit-text-stroke:0.2px currentColor;">47</div>
<div class="t" style="left:339px;top:691.88px;font-size:16px;line-height:18px;color:#8a8a8a;font-family:"Liberation Mono", monospace;transform:scaleX(0.9634);-webkit-text-stroke:0.2px currentColor;">48</div>
<div class="t" style="left:339px;top:713.1600000000001px;font-size:16px;line-height:18px;color:#8a8a8a;font-family:"Liberation Mono", monospace;transform:scaleX(0.9634);-webkit-text-stroke:0.2px currentColor;">49</div>
<div class="t" style="left:339px;top:734.44px;font-size:16px;line-height:18px;color:#8a8a8a;font-family:"Liberation Mono", monospace;transform:scaleX(0.9634);-webkit-text-stroke:0.2px currentColor;">50</div>
<div class="t" style="left:339px;top:755.72px;font-size:16px;line-height:18px;color:#8a8a8a;font-family:"Liberation Mono", monospace;transform:scaleX(0.9634);-webkit-text-stroke:0.2px currentColor;">51</div>
<div class="t" style="left:339px;top:777.0px;font-size:16px;line-height:18px;color:#8a8a8a;font-family:"Liberation Mono", monospace;transform:scaleX(0.9634);-webkit-text-stroke:0.2px currentColor;">52</div>
<div class="t" style="left:339px;top:798.28px;font-size:16px;line-height:18px;color:#8a8a8a;font-family:"Liberation Mono", monospace;transform:scaleX(0.9634);-webkit-text-stroke:0.2px currentColor;">53</div>
<div class="t" style="left:339px;top:819.5600000000001px;font-size:16px;line-height:18px;color:#8a8a8a;font-family:"Liberation Mono", monospace;transform:scaleX(0.9634);-webkit-text-stroke:0.2px currentColor;">54</div>
<div class="t" style="left:339px;top:840.84px;font-size:16px;line-height:18px;color:#8a8a8a;font-family:"Liberation Mono", monospace;transform:scaleX(0.9634);-webkit-text-stroke:0.2px currentColor;">55</div>
<div class="t" style="left:339px;top:862.12px;font-size:16px;line-height:18px;color:#8a8a8a;font-family:"Liberation Mono", monospace;transform:scaleX(0.9634);-webkit-text-stroke:0.2px currentColor;">56</div>
<div class="t" style="left:339px;top:883.4000000000001px;font-size:16px;line-height:18px;color:#8a8a8a;font-family:"Liberation Mono", monospace;transform:scaleX(0.9634);-webkit-text-stroke:0.2px currentColor;">57</div>
<div class="t" style="left:339px;top:904.6800000000001px;font-size:16px;line-height:18px;color:#8a8a8a;font-family:"Liberation Mono", monospace;transform:scaleX(0.9634);-webkit-text-stroke:0.2px currentColor;">58</div>
<div class="t" style="left:339px;top:925.96px;font-size:16px;line-height:18px;color:#8a8a8a;font-family:"Liberation Mono", monospace;transform:scaleX(0.9634);-webkit-text-stroke:0.2px currentColor;">59</div>
<div class="t" style="left:339px;top:947.24px;font-size:16px;line-height:18px;color:#8a8a8a;font-family:"Liberation Mono", monospace;transform:scaleX(0.9634);-webkit-text-stroke:0.2px currentColor;">60</div>
<div class="t" style="left:427px;top:168px;font-size:12.5px;line-height:14px;color:#9a9a9a;transform:scaleX(1.0754);">1 reference</div>
<div class="t" style="left:427px;top:293px;font-size:12.5px;line-height:14px;color:#9a9a9a;transform:scaleX(1.0578);">2 references</div>
<div class="t" style="left:427px;top:652px;font-size:12.5px;line-height:14px;color:#9a9a9a;transform:scaleX(1.0754);">1 reference</div>
<div style="left:0;top:142.5px;width:1588px;height:828.5px;overflow:hidden;">
<div class="c" style="position:absolute;top:42.5px;">        <span class="k">public</span> <span class="y">Teacher</span> <span class="m">GetTeacherById</span>(<span class="k">int</span> <span class="v">teacherId</span>)</div>
<div class="c" style="position:absolute;top:63.78px;">        {</div>
<div class="c" style="position:absolute;top:85.06px;">            <span class="f">return</span> _context<span class="o">.</span>Teachers<span class="o">.</span><span class="m">Find</span>(<span class="v">teacherId</span>);</div>
<div class="c" style="position:absolute;top:106.34000000000003px;">        }</div>
<div class="c" style="position:absolute;top:167.5px;">        <span class="k">public</span> <span class="k">int</span> <span class="m">AddTeacher</span>(<span class="y">Teacher</span> <span class="v">teacher</span>, <span class="i">IFormFile</span> <span class="v">ImgUp</span>)</div>
<div class="c" style="position:absolute;top:188.77999999999997px;">        {</div>
<div class="c" style="position:absolute;top:210.06px;">            <span class="f">if</span> (<span class="v">ImgUp</span> <span class="o">!=</span> <span class="k">null</span>)</div>
<div class="c" style="position:absolute;top:231.34000000000003px;">            {</div>
<div class="c" style="position:absolute;top:252.62px;">                <span class="v">teacher</span><span class="o">.</span>TeacherAvatar <span class="o">=</span> <span class="g">Guid</span><span class="o">.</span>Newuid() <span class="o">+</span> <span class="y">Path</span><span class="o">.</span><span class="m">GetExtension</span>(<span class="v">ImgUp</span><span class="o">.</span>FileName);</div>
<div class="c" style="position:absolute;top:273.9px;">                <span class="k">string</span> <span class="v">imagePath</span> <span class="o">=</span> <span class="y">Path</span><span class="o">.</span><span class="m">Combine</span>(<span class="y">Directory</span><span class="o">.</span><span class="m">GetCurrentDirectory</span>(), <span class="s">&quot;wwwroot/TeacherImages&quot;</span>, <span class="v">teacher</span><span class="o">.</span>TeacherAvatar);</div>
<div class="c" style="position:absolute;top:295.18px;">                <span class="k">using</span> (<span class="k">var</span> <span class="v">stram</span> <span class="o">=</span> <span class="k">new</span> <span class="y">FileStream</span>(<span class="v">imagePath</span>, <span class="i">FileMode</span><span class="o">.</span>Create))</div>
<div class="c" style="position:absolute;top:316.46000000000004px;">                {</div>
<div class="c" style="position:absolute;top:337.74px;">                    <span class="v">ImgUp</span><span class="o">.</span><span class="m">CopyTo</span>(<span class="v">stram</span>);</div>
<div class="c" style="position:absolute;top:359.02px;">                }</div>
<div class="c" style="position:absolute;top:380.29999999999995px;">            }</div>
<div class="c" style="position:absolute;top:401.58000000000004px;">            _context<span class="o">.</span>Teachers<span class="o">.</span><span class="m">Add</span>(<span class="v">teacher</span>);</div>
<div class="c" style="position:absolute;top:422.86px;">            _context<span class="o">.</span><span class="m">SaveChanges</span>();</div>
<div class="c" style="position:absolute;top:444.14px;">            <span class="f">return</span> <span class="v">teacher</span><span class="o">.</span>TeacherId;</div>
<div class="c" style="position:absolute;top:465.4200000000001px;">        }</div>
<div class="c" style="position:absolute;top:526.1px;">        <span class="k">public</span> <span class="k">void</span> <span class="m">UpdateTeacher</span>(<span class="y">Teacher</span> <span class="v">teacher</span>, <span class="i">IFormFile</span> <span class="v">ImgUp</span>)</div>
<div class="c" style="position:absolute;top:547.38px;">        {</div>
<div class="c" style="position:absolute;top:568.6600000000001px;">            <span class="f">if</span> (<span class="v">teacher</span><span class="o">.</span>TeacherAvatar <span class="o">!=</span> <span class="k">null</span>)</div>
<div class="c" style="position:absolute;top:589.94px;">            {</div>
<div class="c" style="position:absolute;top:611.22px;">                <span class="k">string</span> <span class="v">DeleteImage</span> <span class="o">=</span> <span class="y">Path</span><span class="o">.</span><span class="m">Combine</span>(<span class="y">Directory</span><span class="o">.</span><span class="m">GetCurrentDirectory</span>(), <span class="s">&quot;wwwroot/TeacherImages&quot;</span>, <span class="v">teacher</span><span class="o">.</span>TeacherAvatar);</div>
<div class="c" style="position:absolute;top:632.5px;">                <span class="f">if</span> (<span class="y">File</span><span class="o">.</span><span class="m">Exists</span>(<span class="v">DeleteImage</span>))</div>
<div class="c" style="position:absolute;top:653.78px;">                {</div>
<div class="c" style="position:absolute;top:675.0600000000001px;">                    <span class="y">File</span><span class="o">.</span><span class="m">Delete</span>(<span class="v">DeleteImage</span>);</div>
<div class="c" style="position:absolute;top:696.34px;">                }</div>
<div class="c" style="position:absolute;top:717.62px;">                <span class="v">teacher</span><span class="o">.</span>TeacherAvatar <span class="o">=</span> <span class="g">Guid</span><span class="o">.</span><span class="m">NewGuid</span>() <span class="o">+</span> <span class="y">Path</span><span class="o">.</span><span class="m">GetExtension</span>(<span class="v">ImgUp</span><span class="o">.</span>FileName);</div>
<div class="c" style="position:absolute;top:738.9000000000001px;">                <span class="k">string</span> <span class="v">imagePath</span> <span class="o">=</span> <span class="y">Path</span><span class="o">.</span><span class="m">Combine</span>(<span class="y">Directory</span><span class="o">.</span><span class="m">GetCurrentDirectory</span>(), <span class="s">&quot;wwwroot/TeacherImages&quot;</span>, <span class="v">teacher</span><span class="o">.</span>TeacherAvatar);</div>
<div class="c" style="position:absolute;top:760.1800000000001px;">                <span class="k">using</span> (<span class="k">var</span> <span class="v">stram</span> <span class="o">=</span> <span class="k">new</span> <span class="y">FileStream</span>(<span class="v">imagePath</span>, <span class="i">FileMode</span><span class="o">.</span>Create))</div>
<div class="c" style="position:absolute;top:781.46px;">                {</div>
<div class="c" style="position:absolute;top:802.74px;">                    <span class="v">ImgUp</span><span class="o">.</span><span class="m">CopyTo</span>(<span class="v">stram</span>);</div>
<div class="c" style="position:absolute;top:824.02px;">                }</div>
</div>
<svg style="left:503.5px;top:454.48px;" width="16" height="3" viewBox="0 0 16 3"><path d="M0.5 1.2 H2.7 M6 1.2 H8.2 M11.5 1.2 H13.7" stroke="#a8a8a8" stroke-width="2"/></svg>
<svg style="left:503.5px;top:919.48px;" width="16" height="3" viewBox="0 0 16 3"><path d="M0.5 1.2 H2.7 M6 1.2 H8.2 M11.5 1.2 H13.7" stroke="#a8a8a8" stroke-width="2"/></svg>
<div style="left:1627px;top:89px;width:286px;height:880px;background:#1f1f1f;border:1px solid #3d3d3d;box-sizing:border-box;"></div>
<div class="t" style="left:1632px;top:95px;font-size:15px;line-height:17px;color:#d0d0d0;">Solution Explorer</div>
<svg style="left:1850px;top:99px;" width="11" height="7" viewBox="0 0 11 7"><path d="M0 0.5 H10 L5 6 Z" fill="#d8d8d8"/></svg>
<svg style="left:1869px;top:95px;" width="12" height="15" viewBox="0 0 12 15"><g fill="none" stroke="#e0e0e0" stroke-width="1.4"><path d="M3.2 1 H8.8 M3.7 1 V7.2 M8.3 1 V7.2 M1.2 7.7 H10.8 M6 7.7 V14"/></g><path d="M6.6 1 H8.3 V7.2 H6.6 Z" fill="#e0e0e0"/></svg>
<svg style="left:1891px;top:97px;" width="12" height="12" viewBox="0 0 12 12"><path d="M1 1 L11 11 M11 1 L1 11" stroke="#e0e0e0" stroke-width="1.6"/></svg>
<svg style="left:1636px;top:124.5px;" width="18" height="18" viewBox="0 0 18 18"><g fill="none" stroke="#454545" stroke-width="1.4"><circle cx="9" cy="9" r="7.5"/><path d="M12.5 9 H5.5 M8.5 5.5 L5 9 L8.5 12.5"/></g></svg>
<svg style="left:1663px;top:124.5px;" width="18" height="18" viewBox="0 0 18 18"><g fill="none" stroke="#454545" stroke-width="1.4"><circle cx="9" cy="9" r="7.5"/><path d="M5.5 9 H12.5 M9.5 5.5 L13 9 L9.5 12.5"/></g></svg>
<svg style="left:1690px;top:125px;" width="20" height="19" viewBox="0 0 20 19"><path d="M4 9 L10 3 L16 9 V17.5 H12 V12 H8 V17.5 H4 Z" fill="#3a3a3a"/><path d="M1.5 10 L10 2 L18.5 10 M4 8.5 V17.5 H8 V12 H12 V17.5 H16 V8.5" fill="none" stroke="#d8d8d8" stroke-width="1.6"/></svg>
<svg style="left:1716px;top:124px;" width="22" height="22" viewBox="0 0 22 22"><rect x="8.5" y="1" width="11" height="12.5" fill="none" stroke="#c8c8c8" stroke-width="1.4"/><path d="M11 4.5 H17.5 M11 7 H17.5 M11 9.5 H17.5" stroke="#c8c8c8" stroke-width="1.2"/><g transform="translate(0,9)"><path fill="#b180d7" fill-rule="evenodd" d="M8.3 0 L11 1.2 V10.8 L8.3 12 L3.9 7.5 L1.5 9.4 L0 8.7 V3.3 L1.5 2.6 L3.9 4.5 Z M8.2 3.6 L5.4 6 L8.2 8.4 Z M1.3 4.6 V7.4 L2.7 6 Z"/></g></svg>
<div style="left:1745px;top:121px;width:1px;height:24px;background:#3f3f3f;"></div>
<svg style="left:1754px;top:123px;" width="20" height="22" viewBox="0 0 20 22"><path d="M0.5 0.5 H6.5 L4 3.8 V6.5 H3 V3.8 Z" fill="#4a9ae8"/><circle cx="12" cy="13" r="6.6" fill="#333" stroke="#d8d8d8" stroke-width="1.5"/><path d="M12 8.5 V13.5 H16" fill="none" stroke="#d8d8d8" stroke-width="1.5"/></svg>
<svg style="left:1781px;top:133px;" width="9" height="5" viewBox="0 0 9 5"><path d="M0 0 H8 L4 4.5 Z" fill="#d0d0d0"/></svg>
<svg style="left:1797px;top:127px;" width="19" height="16" viewBox="0 0 19 16"><path d="M3 5 H18 M6 1.5 L2 5 M1 11 H16 M13 14.5 L17 11" fill="none" stroke="#d8d8d8" stroke-width="1.5"/></svg>
<svg style="left:1823px;top:124px;" width="21" height="20" viewBox="0 0 21 20"><g fill="#333" stroke="#d8d8d8" stroke-width="1.5"><path d="M4.5 4 V1 H19.5 V15 H16.5"/><rect x="1" y="4.5" width="15" height="14.5" rx="1"/><path d="M4.5 12 H12.5"/></g></svg>
<svg style="left:1851px;top:124.5px;" width="20" height="20" viewBox="0 0 20 20"><g fill="#333" fill-opacity=".8" stroke="#d8d8d8" stroke-width="1.5"><rect x="6.5" y="1" width="12" height="12" rx="1"/><rect x="1" y="6.5" width="12" height="12" rx="1"/></g></svg>
<div style="left:1878px;top:121px;width:1px;height:24px;background:#3f3f3f;"></div>
<svg style="left:1902px;top:122px;" width="8" height="7" viewBox="0 0 8 7"><path d="M0 0 L3 3 L0 6 Z M4.5 0 L7.5 3 L4.5 6 Z" fill="#d0d0d0"/></svg>
<div style="left:1629px;top:152px;width:283px;height:26px;background:#383838;border:1px solid #424242;box-sizing:border-box;"></div>
<div class="t" style="left:1634px;top:157px;font-size:15px;line-height:17px;color:#d0d0d0;transform:scaleX(0.9884);">Search Solution Explorer (Ctrl+ک)</div>
<svg style="left:1877px;top:157px;" width="16" height="16" viewBox="0 0 16 16"><circle cx="10.5" cy="5.5" r="4.2" fill="none" stroke="#d8d8d8" stroke-width="2.3"/><path d="M7.3 8.7 L1.8 14.2" stroke="#d8d8d8" stroke-width="3" stroke-linecap="butt"/></svg>
<svg style="left:1900px;top:163px;" width="8" height="5" viewBox="0 0 8 5"><path d="M0 0 H7 L3.5 4 Z" fill="#c8c8c8"/></svg>
<div style="left:1629px;top:252px;width:283px;height:24px;background:#383838;"></div>
<svg style="left:1646px;top:184px;" width="20" height="19" viewBox="0 0 20 19"><path d="M7 15.5 H1 V1 H18 V8" fill="none" stroke="#c8c8c8" stroke-width="1.4"/><path d="M1 4.5 H18" stroke="#c8c8c8" stroke-width="1.4"/><g transform="translate(7.5,6.5) scale(1.02)"><path fill="#b180d7" fill-rule="evenodd" d="M8.3 0 L11 1.2 V10.8 L8.3 12 L3.9 7.5 L1.5 9.4 L0 8.7 V3.3 L1.5 2.6 L3.9 4.5 Z M8.2 3.6 L5.4 6 L8.2 8.4 Z M1.3 4.6 V7.4 L2.7 6 Z"/></g></svg>
<div class="t" style="left:1672px;top:184px;font-size:15px;line-height:17px;color:#f2f2f2;transform:scaleX(0.9832);">Solution &#x27;LearnPlus&#x27; (3 of 3 projects)</div>
<svg style="left:1641px;top:210.5px;" width="8" height="11" viewBox="0 0 8 11"><path d="M1 0.8 L6.3 5.5 L1 10.2 Z" fill="none" stroke="#d0d0d0" stroke-width="1.3"/></svg>
<svg style="left:1669.5px;top:209px;" width="18" height="16" viewBox="0 0 18 16"><rect x="0.7" y="0.7" width="16.6" height="14.6" rx="1.5" fill="#333" stroke="#8e8e8e" stroke-width="1.4"/><text x="9" y="11.8" font-family="Liberation Sans, sans-serif" font-size="10" font-weight="700" fill="#7fd685" text-anchor="middle">C#</text></svg>
<div class="t" style="left:1693.5px;top:208px;font-size:15px;line-height:17px;color:#f2f2f2;transform:scaleX(0.9258);">LearnPlus.Core</div>
<svg style="left:1641px;top:234.5px;" width="8" height="11" viewBox="0 0 8 11"><path d="M1 0.8 L6.3 5.5 L1 10.2 Z" fill="none" stroke="#d0d0d0" stroke-width="1.3"/></svg>
<svg style="left:1669.5px;top:233px;" width="18" height="16" viewBox="0 0 18 16"><rect x="0.7" y="0.7" width="16.6" height="14.6" rx="1.5" fill="#333" stroke="#8e8e8e" stroke-width="1.4"/><text x="9" y="11.8" font-family="Liberation Sans, sans-serif" font-size="10" font-weight="700" fill="#7fd685" text-anchor="middle">C#</text></svg>
<div class="t" style="left:1693.5px;top:232px;font-size:15px;line-height:17px;color:#f2f2f2;transform:scaleX(0.9402);">LearnPlus.DataLayer</div>
<svg style="left:1641px;top:261px;" width="9" height="9" viewBox="0 0 9 9"><path d="M8 0.5 V8 H0.5 Z" fill="#e8e8e8"/></svg>
<svg style="left:1667.5px;top:255.5px;" width="22" height="20" viewBox="0 0 22 20"><path d="M3.5 4 V1 H20.5 V16.5 H14" fill="none" stroke="#c8c8c8" stroke-width="1.4"/><path d="M3.5 4.5 H20.5" stroke="#c8c8c8" stroke-width="1.6"/><g transform="translate(0,6.5) scale(.72)"><circle cx="9" cy="9" r="9.3" fill="#383838"/><circle cx="9" cy="9" r="8.6" fill="#5aa9e6"/><g fill="none" stroke="#24496e" stroke-width="1.2"><ellipse cx="9" cy="9" rx="3.6" ry="8"/><path d="M1 9 H17 M2.2 5 H15.8 M2.2 13 H15.8"/></g></g></svg>
<div class="t" style="left:1693.5px;top:256px;font-size:15px;line-height:17px;color:#ffffff;font-weight:700;transform:scaleX(0.9668);">LearnPlus.Web</div>
<svg style="left:1664px;top:282.5px;" width="8" height="11" viewBox="0 0 8 11"><path d="M1 0.8 L6.3 5.5 L1 10.2 Z" fill="none" stroke="#d0d0d0" stroke-width="1.3"/></svg>
<svg style="left:1691.5px;top:281px;" width="18.5" height="16" viewBox="0 0 21 18"><path d="M5.5 13.5 H4.5 Q1 13 1 9.5 Q1 6.5 4.5 6 Q5.5 1.5 10.5 1.5 Q15 1.5 16 6 Q20 6.5 20 10 Q20 13.5 16 13.5 H15.5" fill="none" stroke="#4fb0d0" stroke-width="1.6"/><path d="M8 8 V10.5 Q8 13 10.5 13 Q13 13 13 10.5 V8 Z M9.3 5.5 V8 M11.7 5.5 V8 M10.5 13 V17" fill="#7fd8c4" stroke="#7fd8c4" stroke-width="1.2"/></svg>
<div class="t" style="left:1716.5px;top:280px;font-size:15px;line-height:17px;color:#f2f2f2;transform:scaleX(0.9572);">Connected Services</div>
<svg style="left:1664px;top:306.5px;" width="8" height="11" viewBox="0 0 8 11"><path d="M1 0.8 L6.3 5.5 L1 10.2 Z" fill="none" stroke="#d0d0d0" stroke-width="1.3"/></svg>
<svg style="left:1690px;top:304.5px;" width="21" height="14" viewBox="0 0 21 14"><g fill="#2a2a2a" stroke="#c8c8c8" stroke-width="1.3"><path d="M3 7 V3.5 H12.5 M5.3 9.3 H10" fill="none"/><rect x="0.7" y="7" width="4.6" height="4.6"/><rect x="12.8" y="0.7" width="7" height="6"/><rect x="10" y="6.2" width="6.8" height="6.6"/></g></svg>
<div class="t" style="left:1716.5px;top:304px;font-size:15px;line-height:17px;color:#f2f2f2;transform:scaleX(0.9853);">Dependencies</div>
<svg style="left:1664px;top:330.5px;" width="8" height="11" viewBox="0 0 8 11"><path d="M1 0.8 L6.3 5.5 L1 10.2 Z" fill="none" stroke="#d0d0d0" stroke-width="1.3"/></svg>
<svg style="left:1691px;top:327.5px;" width="20" height="18" viewBox="0 0 20 18"><g transform="translate(2.5,0) scale(.93)"><path d="M1 14.3 V1.8 H7.2 L8.6 3.6 H17.6 V14.3 Z" fill="#978862" stroke="#e2c88e" stroke-width="1.4" stroke-linejoin="round"/><path d="M1.5 5.3 H7.2 L8.6 3.8" fill="none" stroke="#e2c88e" stroke-width="1"/></g><path d="M9 16 L4.5 10.5" stroke="#efefef" stroke-width="2.6" stroke-linecap="round"/><path d="M6 7.2 A3 3 0 1 0 6.2 11.6" fill="none" stroke="#efefef" stroke-width="2.1"/></svg>
<div class="t" style="left:1716.5px;top:328px;font-size:15px;line-height:17px;color:#f2f2f2;transform:scaleX(0.9872);">Properties</div>
<svg style="left:1664px;top:357px;" width="9" height="9" viewBox="0 0 9 9"><path d="M8 0.5 V8 H0.5 Z" fill="#e8e8e8"/></svg>
<svg style="left:1691px;top:351px;" width="18" height="18" viewBox="0 0 18 18"><circle cx="9" cy="9" r="7.9" fill="#25384d" stroke="#4a9ae8" stroke-width="1.7"/><g fill="none" stroke="#4a9ae8" stroke-width="1.2"><ellipse cx="9" cy="9" rx="3.7" ry="7.9"/><path d="M1 9 H17 M2.4 4.8 H15.6 M2.4 13.2 H15.6"/></g></svg>
<div class="t" style="left:1716.5px;top:352px;font-size:15px;line-height:17px;color:#f2f2f2;transform:scaleX(1.0538);">wwwroot</div>
<svg style="left:1687px;top:378.5px;" width="8" height="11" viewBox="0 0 8 11"><path d="M1 0.8 L6.3 5.5 L1 10.2 Z" fill="none" stroke="#d0d0d0" stroke-width="1.3"/></svg>
<svg style="left:1714.5px;top:376px;" width="19" height="16" viewBox="0 0 19 16"><path d="M1 14.3 V1.8 H7.2 L8.6 3.6 H17.6 V14.3 Z" fill="#978862" stroke="#e2c88e" stroke-width="1.4" stroke-linejoin="round"/><path d="M1.5 5.3 H7.2 L8.6 3.8" fill="none" stroke="#e2c88e" stroke-width="1"/></svg>
<div class="t" style="left:1738.5px;top:376px;font-size:15px;line-height:17px;color:#f2f2f2;transform:scaleX(0.8667);">css</div>
<svg style="left:1687px;top:402.5px;" width="8" height="11" viewBox="0 0 8 11"><path d="M1 0.8 L6.3 5.5 L1 10.2 Z" fill="none" stroke="#d0d0d0" stroke-width="1.3"/></svg>
<svg style="left:1714.5px;top:400px;" width="19" height="16" viewBox="0 0 19 16"><path d="M1 14.3 V1.8 H7.2 L8.6 3.6 H17.6 V14.3 Z" fill="#978862" stroke="#e2c88e" stroke-width="1.4" stroke-linejoin="round"/><path d="M1.5 5.3 H7.2 L8.6 3.8" fill="none" stroke="#e2c88e" stroke-width="1"/></svg>
<div class="t" style="left:1738.5px;top:400px;font-size:15px;line-height:17px;color:#f2f2f2;transform:scaleX(1.0335);">Editor</div>
<svg style="left:1687px;top:426.5px;" width="8" height="11" viewBox="0 0 8 11"><path d="M1 0.8 L6.3 5.5 L1 10.2 Z" fill="none" stroke="#d0d0d0" stroke-width="1.3"/></svg>
<svg style="left:1714.5px;top:424px;" width="19" height="16" viewBox="0 0 19 16"><path d="M1 14.3 V1.8 H7.2 L8.6 3.6 H17.6 V14.3 Z" fill="#978862" stroke="#e2c88e" stroke-width="1.4" stroke-linejoin="round"/><path d="M1.5 5.3 H7.2 L8.6 3.8" fill="none" stroke="#e2c88e" stroke-width="1"/></svg>
<div class="t" style="left:1738.5px;top:424px;font-size:15px;line-height:17px;color:#f2f2f2;transform:scaleX(0.9683);">js</div>
<svg style="left:1687px;top:450.5px;" width="8" height="11" viewBox="0 0 8 11"><path d="M1 0.8 L6.3 5.5 L1 10.2 Z" fill="none" stroke="#d0d0d0" stroke-width="1.3"/></svg>
<svg style="left:1714.5px;top:448px;" width="19" height="16" viewBox="0 0 19 16"><path d="M1 14.3 V1.8 H7.2 L8.6 3.6 H17.6 V14.3 Z" fill="#978862" stroke="#e2c88e" stroke-width="1.4" stroke-linejoin="round"/><path d="M1.5 5.3 H7.2 L8.6 3.8" fill="none" stroke="#e2c88e" stroke-width="1"/></svg>
<div class="t" style="left:1738.5px;top:448px;font-size:15px;line-height:17px;color:#f2f2f2;transform:scaleX(1.1322);">lib</div>
<svg style="left:1714.5px;top:472px;" width="19" height="16" viewBox="0 0 19 16"><path d="M1 14.3 V1.8 H7.2 L8.6 3.6 H17.6 V14.3 Z" fill="#978862" stroke="#e2c88e" stroke-width="1.4" stroke-linejoin="round"/><path d="M1.5 5.3 H7.2 L8.6 3.8" fill="none" stroke="#e2c88e" stroke-width="1"/></svg>
<div class="t" style="left:1738.5px;top:472px;font-size:15px;line-height:17px;color:#f2f2f2;transform:scaleX(0.9701);">TeacherImages</div>
<svg style="left:1716px;top:496px;" width="16" height="18" viewBox="0 0 16 18"><path d="M1 1 H10.5 L15 5.5 V17 H1 Z" fill="none" stroke="#c8c8c8" stroke-width="1.4"/><path d="M3.5 4 H8" stroke="#c8c8c8" stroke-width="1.2" stroke-dasharray="1.2 1.2"/><rect x="3.5" y="8.5" width="7" height="6" fill="#c8c8c8"/><path d="M7 9.5 L7.7 11 L9.2 11.1 L8 12.1 L8.4 13.6 L7 12.8 L5.6 13.6 L6 12.1 L4.8 11.1 L6.3 11 Z" fill="#1f1f1f"/></svg>
<div class="t" style="left:1738.5px;top:496px;font-size:15px;line-height:17px;color:#f2f2f2;transform:scaleX(1.0088);">favicon.ico</div>
<svg style="left:1664px;top:522.5px;" width="8" height="11" viewBox="0 0 8 11"><path d="M1 0.8 L6.3 5.5 L1 10.2 Z" fill="none" stroke="#d0d0d0" stroke-width="1.3"/></svg>
<svg style="left:1690.5px;top:520px;" width="19" height="16" viewBox="0 0 19 16"><path d="M1 14.3 V1.8 H7.2 L8.6 3.6 H17.6 V14.3 Z" fill="#978862" stroke="#e2c88e" stroke-width="1.4" stroke-linejoin="round"/><path d="M1.5 5.3 H7.2 L8.6 3.8" fill="none" stroke="#e2c88e" stroke-width="1"/></svg>
<div class="t" style="left:1716.5px;top:520px;font-size:15px;line-height:17px;color:#f2f2f2;">Controllers</div>
<svg style="left:1664px;top:546.5px;" width="8" height="11" viewBox="0 0 8 11"><path d="M1 0.8 L6.3 5.5 L1 10.2 Z" fill="none" stroke="#d0d0d0" stroke-width="1.3"/></svg>
<svg style="left:1690.5px;top:544px;" width="19" height="16" viewBox="0 0 19 16"><path d="M1 14.3 V1.8 H7.2 L8.6 3.6 H17.6 V14.3 Z" fill="#978862" stroke="#e2c88e" stroke-width="1.4" stroke-linejoin="round"/><path d="M1.5 5.3 H7.2 L8.6 3.8" fill="none" stroke="#e2c88e" stroke-width="1"/></svg>
<div class="t" style="left:1716.5px;top:544px;font-size:15px;line-height:17px;color:#f2f2f2;transform:scaleX(0.9049);">Pages</div>
<svg style="left:1664px;top:570.5px;" width="8" height="11" viewBox="0 0 8 11"><path d="M1 0.8 L6.3 5.5 L1 10.2 Z" fill="none" stroke="#d0d0d0" stroke-width="1.3"/></svg>
<svg style="left:1690.5px;top:568px;" width="19" height="16" viewBox="0 0 19 16"><path d="M1 14.3 V1.8 H7.2 L8.6 3.6 H17.6 V14.3 Z" fill="#978862" stroke="#e2c88e" stroke-width="1.4" stroke-linejoin="round"/><path d="M1.5 5.3 H7.2 L8.6 3.8" fill="none" stroke="#e2c88e" stroke-width="1"/></svg>
<div class="t" style="left:1716.5px;top:568px;font-size:15px;line-height:17px;color:#f2f2f2;transform:scaleX(0.9686);">Views</div>
<svg style="left:1664px;top:594.5px;" width="8" height="11" viewBox="0 0 8 11"><path d="M1 0.8 L6.3 5.5 L1 10.2 Z" fill="none" stroke="#d0d0d0" stroke-width="1.3"/></svg>
<svg style="left:1692px;top:592px;" width="16" height="18" viewBox="0 0 16 18"><path d="M1 1 H10.5 L15 5.5 V17 H1 Z" fill="none" stroke="#c8c8c8" stroke-width="1.4"/><path d="M6.5 8 Q5 8 5.2 9.5 Q5.4 11 4 11.2 Q5.4 11.4 5.2 13 Q5 14.5 6.5 14.5 M9.5 8 Q11 8 10.8 9.5 Q10.6 11 12 11.2 Q10.6 11.4 10.8 13 Q11 14.5 9.5 14.5" fill="none" stroke="#c8c8c8" stroke-width="1.1"/></svg>
<div class="t" style="left:1716.5px;top:592px;font-size:15px;line-height:17px;color:#f2f2f2;transform:scaleX(0.9916);">appsettings.json</div>
<svg style="left:1664px;top:618.5px;" width="8" height="11" viewBox="0 0 8 11"><path d="M1 0.8 L6.3 5.5 L1 10.2 Z" fill="none" stroke="#d0d0d0" stroke-width="1.3"/></svg>
<svg style="left:1691px;top:618px;" width="20" height="14" viewBox="0 0 20 14"><text x="0" y="12" font-family="Liberation Sans, sans-serif" font-size="13" font-weight="700" fill="#6ccb6f" textLength="19" lengthAdjust="spacingAndGlyphs">C#</text></svg>
<div class="t" style="left:1716.5px;top:616px;font-size:15px;line-height:17px;color:#f2f2f2;transform:scaleX(0.9454);">Program.cs</div>
<div style="left:1627px;top:968px;width:129px;height:25px;background:#1f1f1f;border:1px solid #3d3d3d;box-sizing:border-box;border-top:none;"></div>
<div class="t" style="left:1634px;top:972px;font-size:15px;line-height:17px;color:#f2f2f2;">Solution Explorer</div>
<div class="t" style="left:1762px;top:972px;font-size:15px;line-height:17px;color:#999999;transform:scaleX(0.9473);">Git Changes</div>
<div style="left:265px;top:971px;width:1353px;height:22px;background:#2d2d2d;"></div>
<div style="left:265px;top:971px;width:75px;height:22px;background:#333333;border:1px solid #434343;box-sizing:border-box;"></div>
<div class="t" style="left:269px;top:974px;font-size:14.5px;line-height:16px;color:#f0f0f0;transform:scaleX(0.9240);">100 %</div>
<svg style="left:329px;top:980px;" width="8" height="5" viewBox="0 0 8 5"><path d="M0 0 H7 L3.5 4 Z" fill="#c8c8c8"/></svg>
<svg style="left:369px;top:974px;" width="15" height="15" viewBox="0 0 15 15"><circle cx="7.5" cy="7.5" r="7" fill="#89d185"/><path d="M4 7.8 L6.6 10.3 L11 5.2" fill="none" stroke="#1c3d20" stroke-width="1.7"/></svg>
<div class="t" style="left:390px;top:974px;font-size:14.5px;line-height:16px;color:#f0f0f0;transform:scaleX(0.9424);">No issues found</div>
<div style="left:568px;top:973px;width:1px;height:18px;background:#c8c8c8;"></div>
<svg style="left:585px;top:973px;" width="18" height="18" viewBox="0 0 18 18"><path d="M16.5 1.5 L9 9" stroke="#c8c8c8" stroke-width="2.2" stroke-linecap="round"/><path d="M6.5 8 L10.5 12 L6 17 L1.5 12.5 Z" fill="#d9c178" stroke="#b59c50" stroke-width="1"/><path d="M3.5 11.5 L7 15 M5 10 L8.5 13.5" stroke="#8a7434" stroke-width=".9"/></svg>
<svg style="left:608px;top:979px;" width="9" height="6" viewBox="0 0 9 6"><path d="M0 0 H8.5 L4.25 5 Z" fill="#e0e0e0"/></svg>
<svg style="left:654px;top:976px;" width="8" height="12" viewBox="0 0 8 12"><path d="M7 0.5 V11.5 L0.5 6 Z" fill="#c8c8c8"/></svg>
<div style="left:692px;top:976px;width:539px;height:11px;background:#4d4d4d;"></div>
<svg style="left:1359px;top:976px;" width="8" height="12" viewBox="0 0 8 12"><path d="M0.5 0.5 V11.5 L7 6 Z" fill="#c8c8c8"/></svg>
<div class="t" style="left:1401px;top:974px;font-size:14px;line-height:16px;color:#f0f0f0;transform:scaleX(0.9759);">Ln: 35</div>
<div class="t" style="left:1462px;top:974px;font-size:14px;line-height:16px;color:#f0f0f0;transform:scaleX(0.9697);">Ch: 49</div>
<div style="left:1513px;top:971px;width:48px;height:22px;border:1px solid #444;box-sizing:border-box;"></div>
<div class="t" style="left:1526px;top:974px;font-size:14px;line-height:16px;color:#f0f0f0;transform:scaleX(0.8334);">SPC</div>
<div style="left:1561px;top:971px;width:57px;height:22px;border:1px solid #444;box-sizing:border-box;"></div>
<div class="t" style="left:1575px;top:974px;font-size:14px;line-height:16px;color:#f0f0f0;transform:scaleX(0.8752);">CRLF</div>
<div style="left:0px;top:1000px;width:1920px;height:30px;background:#424242;"></div>
<svg style="left:5px;top:1005px;" width="21" height="21" viewBox="0 0 21 21"><g fill="none" stroke="#d8d8d8" stroke-width="1.4"><path d="M1 1 H20 V15.5 H9.5 L5.5 19.5 V15.5 H1 Z"/><path d="M4.5 5 H13.5 M4.5 8.2 H16.5 M4.5 11.4 H11.5"/></g></svg>
<div class="t" style="left:35px;top:1007px;font-size:15px;line-height:17px;color:#f2f2f2;transform:scaleX(0.9456);">Ready</div>
<svg style="left:1467px;top:1005px;" width="16" height="19" viewBox="0 0 16 19"><path d="M8 18 V1.5 M1.5 8 L8 1.2 L14.5 8" fill="none" stroke="#e0e0e0" stroke-width="1.5"/></svg>
<div class="t" style="left:1493px;top:1007px;font-size:15px;line-height:17px;color:#f2f2f2;">Add to Source Control</div>
<svg style="left:1649px;top:1012px;" width="10" height="6" viewBox="0 0 10 6"><path d="M0 5.5 L4.5 0.5 L9 5.5 Z" fill="#e8e8e8"/></svg>
<svg style="left:1687px;top:1007px;" width="19" height="17" viewBox="0 0 19 17"><g fill="none" stroke="#e0e0e0" stroke-width="1.5"><path d="M0.8 1 H18.2 V5 H0.8 Z M3 5 V16 H16 V5"/><path d="M7 8 H12 M7 8 V10.5 H12 V8"/></g></svg>
<div class="t" style="left:1713px;top:1007px;font-size:15px;line-height:17px;color:#f2f2f2;transform:scaleX(0.9782);">Select Repository</div>
<svg style="left:1835px;top:1012px;" width="10" height="6" viewBox="0 0 10 6"><path d="M0 5.5 L4.5 0.5 L9 5.5 Z" fill="#e8e8e8"/></svg>
<svg style="left:1872px;top:1005px;" width="20" height="20" viewBox="0 0 20 20"><path d="M3 15 Q5 13 5 8 Q5 2.5 9.5 2.5 Q14 2.5 14 8 Q14 13 16 15 Z M8 17.5 Q9.5 19 11 17.5" fill="none" stroke="#e0e0e0" stroke-width="1.4"/></svg>
<div style="left:1881px;top:1012px;width:16px;height:16px;border-radius:8px;background:#f4919f;color:#1f1f1f;font-size:11px;line-height:16px;text-align:center;">3</div>
<div style="left:0px;top:1030px;width:1920px;height:50px;background:#1c1c1c;"></div>
<svg style="left:20px;top:1045px;" width="20" height="20" viewBox="0 0 20 20"><path d="M0 2.8 L8.5 1.6 V9.5 H0 Z M9.7 1.4 L20 0 V9.5 H9.7 Z M0 10.7 H8.5 V18.5 L0 17.3 Z M9.7 10.7 H20 V20 L9.7 18.6 Z" fill="#ffffff"/></svg>
<div style="left:60px;top:1030px;width:430px;height:50px;background:#f2f2f2;"></div>
<svg style="left:75px;top:1044px;" width="22" height="22" viewBox="0 0 22 22"><circle cx="13" cy="8.5" r="6.3" fill="none" stroke="#222" stroke-width="1.7"/><path d="M8.6 13 L2 19.8" stroke="#222" stroke-width="1.8"/></svg>
<div class="t" style="left:110px;top:1045px;font-size:19px;line-height:21px;color:#2e2e2e;transform:scaleX(0.9706);">Type here to search</div>
<svg style="left:380px;top:1030px;" width="110" height="50" viewBox="0 0 110 50"><defs>
<linearGradient id="gnd" x1="0" y1="0" x2="1" y2="0"><stop offset="0" stop-color="#c6c6f0"/><stop offset=".45" stop-color="#d9c7e6"/><stop offset="1" stop-color="#c3c0ee"/></linearGradient>
<radialGradient id="bod" cx=".38" cy=".3" r=".85"><stop offset="0" stop-color="#f3e6e2"/><stop offset=".55" stop-color="#d9c6d6"/><stop offset="1" stop-color="#a78bbd"/></radialGradient>
<radialGradient id="hd" cx=".4" cy=".45" r=".8"><stop offset="0" stop-color="#f4ebea"/><stop offset="1" stop-color="#c3b2d6"/></radialGradient>
<linearGradient id="ear" x1="0" y1="0" x2="0" y2="1"><stop offset="0" stop-color="#d6cdea"/><stop offset="1" stop-color="#a99ccc"/></linearGradient>
</defs>
<ellipse cx="88" cy="66" rx="84" ry="27" fill="url(#gnd)"/>
<ellipse cx="85" cy="45.5" rx="17" ry="4.2" fill="#7f84c0" opacity=".75"/>
<path d="M53.5 17.5 Q52 6.5 58.5 3.5 Q61 9 58 18 Z" fill="url(#ear)"/>
<path d="M57 19 Q59 8 66 4.2 Q68 10 61 21 Z" fill="#e6def0"/>
<path d="M58.3 18.5 Q60 10.5 64.8 7.5 Q65.2 12 60.2 19.5 Z" fill="#c8a892"/>
<ellipse cx="68" cy="36" rx="11.5" ry="12" fill="url(#bod)"/>
<path d="M49 28 Q47 38 52 45 L53 49 L57 49 Q60 42 66 38 L62 26 Z" fill="url(#bod)"/>
<ellipse cx="71.5" cy="39" rx="7" ry="8.3" fill="#eadfea"/>
<path d="M60 47 Q63 44.5 72 46 Q77 47 75.5 49 Q70 50.5 61.5 49.5 Z" fill="#c6abd0"/>
<path d="M50.5 44 L50 48.5 Q52 50 54 48.5 L54 45 Z M54.5 45 L54 49.5 Q56 51 58 49.5 L58 45 Z" fill="#c9b3d4"/>
<ellipse cx="52.5" cy="21.5" rx="7.8" ry="6.2" transform="rotate(-22 52.5 21.5)" fill="url(#hd)"/>
<ellipse cx="53.2" cy="20" rx="2" ry="1.5" fill="#ffffff"/>
<ellipse cx="53.5" cy="19.8" rx="1.45" ry="1.15" fill="#4a1a12"/>
<ellipse cx="45.8" cy="22.3" rx="1" ry="1.1" fill="#5a2418"/>
</svg>
<svg style="left:509px;top:1044px;" width="23" height="21" viewBox="0 0 23 21"><g fill="none" stroke="#ffffff" stroke-width="1.4"><rect x="1" y="5.5" width="13" height="10"/><path d="M0.3 1.5 H14.7 M0.3 19.5 H14.7 M1 1.5 V3 M14 1.5 V3 M1 18 V19.5 M14 18 V19.5 M19.2 0.5 V20.5"/></g><rect x="17.8" y="7" width="2.8" height="3.6" fill="#ffffff"/></svg>
<div style="left:554px;top:1030px;width:61px;height:50px;background:#4b4b4b;"></div>
<div style="left:554px;top:1077px;width:61px;height:3px;background:#a5d3f5;"></div>
<svg style="left:570px;top:1040px;" width="30" height="30" viewBox="0 0 24 24"><path fill="#8a5fd6" fill-rule="evenodd" d="M17.6 0.1 L22.6 2.3 Q24 3 24 4.4 V19.6 Q24 21 22.6 21.7 L17.6 23.9 Q16.8 24 16.2 23.4 L8.5 14.7 L3.6 18.7 Q3 19.1 2.3 18.8 L0.7 18.1 Q0 17.8 0 17.2 V6.8 Q0 6.2 0.7 5.9 L2.3 5.2 Q3 4.9 3.6 5.3 L8.5 9.3 L16.2 0.6 Q16.8 0 17.6 0.1 Z M18 6.9 V17.1 L11.8 12 Z M3 8.6 V15.4 L6.1 12 Z"/><path d="M17.6 0.1 L22.6 2.3 Q24 3 24 4.4 V19.6 Q24 21 22.6 21.7 L17.6 23.9 Z" fill="#b99cf0"/></svg>
<svg style="left:631px;top:1041px;" width="30" height="28" viewBox="0 0 30 28"><path d="M1 4 H11 L13.5 7 H29 V25 H1 Z" fill="#e6a417"/><path d="M1 9 H29 V26 H1 Z" fill="#ffd35a"/><path d="M9 17 H21 V26 H9 Z" fill="#3d8ed8"/><path d="M12 21 H18 V26 H12 Z" fill="#ffd35a"/></svg>
<svg style="left:692px;top:1039px;" width="32" height="32" viewBox="0 0 32 32"><circle cx="15" cy="15" r="14" fill="#e8453c"/><path d="M15 15 L2.9 8 A14 14 0 0 0 15 29 Z" fill="#34a853"/><path d="M15 15 L15 29 A14 14 0 0 0 27.1 8 Z" fill="#fbbc05"/><path d="M15 1 A14 14 0 0 1 27.1 8 H15 Z" fill="#e8453c"/><path d="M2.9 8 A14 14 0 0 1 27.1 8 L15 15 Z" fill="#e8453c"/><circle cx="15" cy="15" r="6.2" fill="#fff"/><circle cx="15" cy="15" r="4.9" fill="#4285f4"/><circle cx="23" cy="23" r="9.6" fill="#5d4037" stroke="#1c1c1c" stroke-width="1"/><text x="23" y="27.3" font-family="Liberation Sans, sans-serif" font-size="12" fill="#fff" text-anchor="middle">M</text></svg>
<div style="left:683px;top:1077px;width:51px;height:3px;background:#a5d3f5;"></div>
<svg style="left:755px;top:1040px;" width="30" height="30" viewBox="0 0 30 30"><path d="M8 4 H20 V20 H8 Z" fill="#f0c419"/><ellipse cx="14" cy="4.5" rx="6" ry="2.8" fill="#f7dc6f"/><ellipse cx="14" cy="20" rx="6" ry="2.8" fill="#d4a90f"/><path d="M1 8 V1.5 H7 M23 1.5 H29 V8 M1 22 V28.5 H7" fill="none" stroke="#3fb34f" stroke-width="2"/><path d="M16 27 L27 16 M19 16 L27 24" stroke="#2f7fd6" stroke-width="2.6" stroke-linecap="round"/></svg>
<svg style="left:1380px;top:1044px;" width="31" height="22" viewBox="0 0 31 22"><g fill="none" stroke="#f0f0f0" stroke-width="1.5"><path d="M4.5 4 V1 H30 V21 H1 V4 H26 V21"/><rect x="5" y="8.5" width="8" height="7"/><path d="M16 8.5 H22.5 M16 12 H22.5 M16 15.5 H22.5"/></g></svg>
<div class="t" style="left:1420px;top:1047px;font-size:18px;line-height:20px;color:#ffffff;transform:scaleX(0.9158);">56°F</div>
<div class="t" style="left:1465px;top:1047px;font-size:18px;line-height:20px;color:#ffffff;">Mostly clear</div>
<svg style="left:1581px;top:1049px;" width="19" height="11" viewBox="0 0 19 11"><path d="M1 10 L9.5 1.5 L18 10" fill="none" stroke="#ffffff" stroke-width="1.5"/></svg>
<svg style="left:1613px;top:1045px;" width="18" height="20" viewBox="0 0 18 20"><g fill="none" stroke="#f0f0f0" stroke-width="1.3"><rect x="2" y="2.5" width="10.5" height="14" rx="4"/><path d="M12.5 7.5 L17 5.5 V13.5 L12.5 11.5 M5 5.5 H7.5"/></g></svg>
<svg style="left:1639px;top:1046px;" width="23" height="17" viewBox="0 0 23 17"><g fill="none" stroke="#f0f0f0" stroke-width="1.4"><rect x="5" y="4.5" width="15.5" height="9"/><path d="M20.5 7 H22 V11 H20.5"/><path d="M3 1 V5 M1 2.5 V6 Q1 7.5 3 7.5 Q5 7.5 5 6 V2.5"/></g><rect x="6.8" y="6.3" width="11.9" height="5.4" fill="#f0f0f0"/></svg>
<svg style="left:1670px;top:1045px;" width="22" height="20" viewBox="0 0 22 20"><g fill="none" stroke-width="1.6"><path d="M3 18 A13 13 0 0 1 19.5 5" stroke="#f0f0f0"/><path d="M7 18 A9 9 0 0 1 18 9.5" stroke="#f0f0f0"/><path d="M11 18 A5 5 0 0 1 16.5 13.5" stroke="#f0f0f0"/></g><circle cx="15" cy="17.5" r="1.5" fill="#f0f0f0"/></svg>
<svg style="left:1698px;top:1045px;" width="24" height="20" viewBox="0 0 24 20"><path d="M1 7 H4.5 L9.5 2.5 V17.5 L4.5 13 H1 Z" fill="none" stroke="#f0f0f0" stroke-width="1.4"/><path d="M12.5 7 Q14.5 10 12.5 13" fill="none" stroke="#f0f0f0" stroke-width="1.3"/><path d="M15.5 4.5 Q19 10 15.5 15.5 M18.5 2.5 Q23 10 18.5 17.5" fill="none" stroke="#8a8a8a" stroke-width="1.3"/></svg>
<div class="t" style="left:1733px;top:1048px;font-size:15px;line-height:17px;color:#ffffff;transform:scaleX(0.8919);">ENG</div>
<div class="t" style="left:1786px;top:1035px;font-size:15px;line-height:17px;color:#ffffff;transform:scaleX(0.9306);">7:26 PM</div>
<div class="t" style="left:1779px;top:1058px;font-size:15px;line-height:17px;color:#ffffff;">1/22/2023</div>
<svg style="left:1868px;top:1043px;" width="34" height="28" viewBox="0 0 34 28"><path d="M1.5 1.5 H22 V17.5 H10 L5.5 22 V17.5 H1.5 Z" fill="#ffffff"/><path d="M5 6 H18.5 M5 9.5 H18.5 M5 13 H14" stroke="#1c1c1c" stroke-width="1.3"/><circle cx="22.5" cy="18.5" r="9.3" fill="#1c1c1c" stroke="#8a8a8a" stroke-width="1.2"/><text x="22.5" y="23.3" font-family="Liberation Sans, sans-serif" font-size="13" fill="#ffffff" text-anchor="middle" textLength="13" lengthAdjust="spacingAndGlyphs">19</text></svg>
<div style="left:1914px;top:1034px;width:1px;height:42px;background:#5a5a5a;"></div>
<div class="t" style="left:1554px;top:926px;font-size:25px;line-height:28px;color:rgba(190,190,190,.62);">Activate Windows</div>
<div class="t" style="left:1554px;top:960px;font-size:18px;line-height:20px;color:rgba(190,190,190,.55);transform:scaleX(0.9960);">Go to Settings to activate Windows.</div>
</body></html>
